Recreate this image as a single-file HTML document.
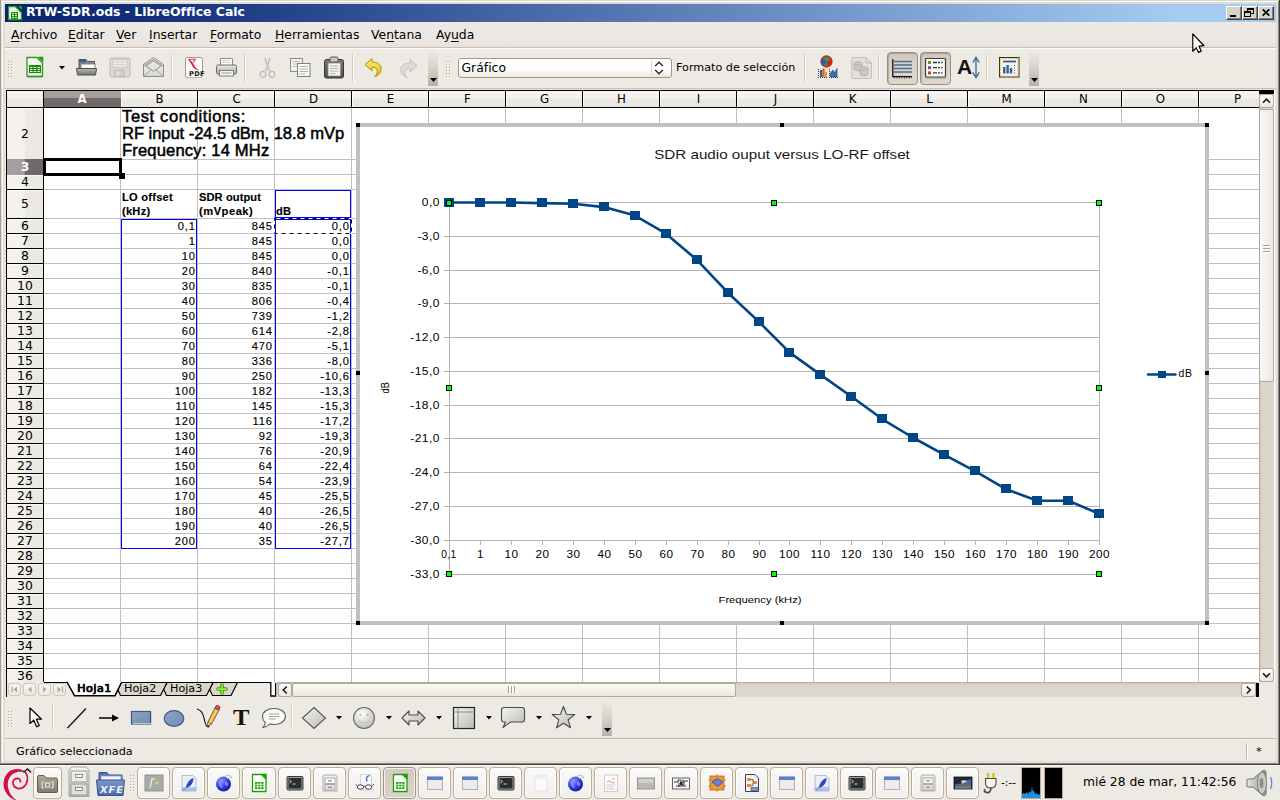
<!DOCTYPE html>
<html lang="es"><head><meta charset="utf-8"><title>RTW-SDR.ods - LibreOffice Calc</title>
<style>
html,body{margin:0;padding:0;}
body{width:1280px;height:800px;overflow:hidden;background:#edeae4;font-family:"DejaVu Sans","Liberation Sans",sans-serif;}
#root{position:relative;width:1280px;height:800px;overflow:hidden;background:#edeae4;}
#root div{position:absolute;box-sizing:border-box;}
#root svg{position:absolute;overflow:visible;}
.t{white-space:pre;line-height:1;color:#000;}
.ui{font-family:"DejaVu Sans","Liberation Sans",sans-serif;font-size:12.5px;}
.cell{font-family:"Liberation Sans",sans-serif;font-size:12px;-webkit-text-stroke:0.15px currentColor;}
u{text-decoration:underline;text-underline-offset:2px;text-decoration-thickness:1px;}

</style></head><body>
<div id="root">
<div style="left:0px;top:0px;width:1280px;height:765px;background:#edeae4;"></div>
<div style="left:0px;top:0px;width:1px;height:765px;background:#a99f8e;"></div>
<div style="left:1px;top:0px;width:1px;height:765px;background:#dedad3;"></div>
<div style="left:2px;top:0px;width:1px;height:765px;background:#ffffff;"></div>
<div style="left:3px;top:0px;width:2px;height:765px;background:#e0ddd5;"></div>
<div style="left:1276px;top:0px;width:2px;height:765px;background:#e0ddd5;"></div>
<div style="left:1278px;top:0px;width:1px;height:765px;background:#8a8883;"></div>
<div style="left:1279px;top:0px;width:1px;height:765px;background:#3d3d3d;"></div>
<div style="left:1px;top:0px;width:1278px;height:1px;background:#dad7d0;"></div>
<div style="left:2px;top:1px;width:1276px;height:1px;background:#ffffff;"></div>
<div style="left:3px;top:2px;width:1273px;height:2px;background:#e0ddd5;"></div>
<div style="left:3px;top:761px;width:1274px;height:2px;background:#e0ddd5;"></div>
<div style="left:1px;top:763px;width:1278px;height:1px;background:#8a8883;"></div>
<div style="left:0px;top:764px;width:1280px;height:1px;background:#3d3d3d;"></div>
<div style="left:5px;top:4px;width:1271px;height:18px;background:linear-gradient(90deg,#0a246a 0,#14307a 12%,#5a78b4 50%,#a6caf0 92%,#a6caf0 100%);"></div>
<svg style="left:0px;top:0px" width="30" height="24" viewBox="0 0 30 24">
<path d="M8.6 6.6 H15.4 L21.4 12.6 V19.6 H8.6 Z" fill="#f4eef6" stroke="#24a30c" stroke-width="1.2"/>
<path d="M17.8 6 H22 V10.2 Z" fill="#1fa600"/>
<rect x="11" y="12" width="7" height="7" rx="0.6" fill="#138a00"/>
<path d="M12 13.6 H14 M15 13.6 H17 M12 15.6 H14 M15 15.6 H17 M12 17.6 H14 M15 17.6 H17" stroke="#eaf7e6" stroke-width="1"/>
</svg>
<div class="t ui" style="left:26px;top:5.5px;font-weight:bold;font-size:12.45px;color:#fff;">RTW-SDR.ods - LibreOffice Calc</div>
<div style="left:1226px;top:6px;width:16px;height:14px;background:#d6d3cb;border-top:1px solid #fff;border-left:1px solid #fff;border-right:1px solid #404040;border-bottom:1px solid #404040;"></div>
<div style="left:1227px;top:18px;width:14px;height:1px;background:#808080;"></div>
<div style="left:1240px;top:7px;width:1px;height:12px;background:#808080;"></div>
<div style="left:1230px;top:15px;width:6px;height:2px;background:#000;"></div>
<div style="left:1242px;top:6px;width:16px;height:14px;background:#d6d3cb;border-top:1px solid #fff;border-left:1px solid #fff;border-right:1px solid #404040;border-bottom:1px solid #404040;"></div>
<div style="left:1243px;top:18px;width:14px;height:1px;background:#808080;"></div>
<div style="left:1256px;top:7px;width:1px;height:12px;background:#808080;"></div>
<div style="left:1247px;top:8px;width:7px;height:6px;border:1px solid #000;border-top-width:2px;"></div>
<div style="left:1244px;top:11px;width:7px;height:6px;border:1px solid #000;border-top-width:2px;background:#d6d3cb;"></div>
<div style="left:1258px;top:6px;width:16px;height:14px;background:#d6d3cb;border-top:1px solid #fff;border-left:1px solid #fff;border-right:1px solid #404040;border-bottom:1px solid #404040;"></div>
<div style="left:1259px;top:18px;width:14px;height:1px;background:#808080;"></div>
<div style="left:1272px;top:7px;width:1px;height:12px;background:#808080;"></div>
<svg style="left:1262px;top:9px" width="8" height="7" viewBox="0 0 8 7"><path d="M0.7 0.4 L7.3 6.6 M7.3 0.4 L0.7 6.6" stroke="#000" stroke-width="1.7"/></svg>
<div style="left:5px;top:22px;width:1271px;height:26px;background:linear-gradient(180deg,#edeae4 0,#ebe7e2 70%,#e6e1db 100%);border-bottom:1px solid #cdbfac;"></div>
<div style="left:5px;top:48px;width:1271px;height:1px;background:#fdfcfb;"></div>
<div class="t ui" style="left:11px;top:28.5px;font-size:12.4px;"><u>A</u>rchivo</div>
<div class="t ui" style="left:68px;top:28.5px;font-size:12.4px;"><u>E</u>ditar</div>
<div class="t ui" style="left:116px;top:28.5px;font-size:12.4px;"><u>V</u>er</div>
<div class="t ui" style="left:149px;top:28.5px;font-size:12.4px;"><u>I</u>nsertar</div>
<div class="t ui" style="left:210px;top:28.5px;font-size:12.4px;"><u>F</u>ormato</div>
<div class="t ui" style="left:275px;top:28.5px;font-size:12.4px;"><u>H</u>erramientas</div>
<div class="t ui" style="left:371px;top:28.5px;font-size:12.4px;">Ve<u>n</u>tana</div>
<div class="t ui" style="left:436px;top:28.5px;font-size:12.4px;">Ay<u>u</u>da</div>
<div style="left:8px;top:61px;width:1px;height:1px;background:#b5a590;"></div>
<div style="left:9px;top:62px;width:1px;height:1px;background:#fbfaf8;"></div>
<div style="left:11px;top:61px;width:1px;height:1px;background:#b5a590;"></div>
<div style="left:12px;top:62px;width:1px;height:1px;background:#fbfaf8;"></div>
<div style="left:8px;top:64px;width:1px;height:1px;background:#b5a590;"></div>
<div style="left:9px;top:65px;width:1px;height:1px;background:#fbfaf8;"></div>
<div style="left:11px;top:64px;width:1px;height:1px;background:#b5a590;"></div>
<div style="left:12px;top:65px;width:1px;height:1px;background:#fbfaf8;"></div>
<div style="left:8px;top:67px;width:1px;height:1px;background:#b5a590;"></div>
<div style="left:9px;top:68px;width:1px;height:1px;background:#fbfaf8;"></div>
<div style="left:11px;top:67px;width:1px;height:1px;background:#b5a590;"></div>
<div style="left:12px;top:68px;width:1px;height:1px;background:#fbfaf8;"></div>
<div style="left:8px;top:70px;width:1px;height:1px;background:#b5a590;"></div>
<div style="left:9px;top:71px;width:1px;height:1px;background:#fbfaf8;"></div>
<div style="left:11px;top:70px;width:1px;height:1px;background:#b5a590;"></div>
<div style="left:12px;top:71px;width:1px;height:1px;background:#fbfaf8;"></div>
<div style="left:8px;top:73px;width:1px;height:1px;background:#b5a590;"></div>
<div style="left:9px;top:74px;width:1px;height:1px;background:#fbfaf8;"></div>
<div style="left:11px;top:73px;width:1px;height:1px;background:#b5a590;"></div>
<div style="left:12px;top:74px;width:1px;height:1px;background:#fbfaf8;"></div>
<div style="left:8px;top:76px;width:1px;height:1px;background:#b5a590;"></div>
<div style="left:9px;top:77px;width:1px;height:1px;background:#fbfaf8;"></div>
<div style="left:11px;top:76px;width:1px;height:1px;background:#b5a590;"></div>
<div style="left:12px;top:77px;width:1px;height:1px;background:#fbfaf8;"></div>
<div style="left:446px;top:61px;width:1px;height:1px;background:#b5a590;"></div>
<div style="left:447px;top:62px;width:1px;height:1px;background:#fbfaf8;"></div>
<div style="left:449px;top:61px;width:1px;height:1px;background:#b5a590;"></div>
<div style="left:450px;top:62px;width:1px;height:1px;background:#fbfaf8;"></div>
<div style="left:446px;top:64px;width:1px;height:1px;background:#b5a590;"></div>
<div style="left:447px;top:65px;width:1px;height:1px;background:#fbfaf8;"></div>
<div style="left:449px;top:64px;width:1px;height:1px;background:#b5a590;"></div>
<div style="left:450px;top:65px;width:1px;height:1px;background:#fbfaf8;"></div>
<div style="left:446px;top:67px;width:1px;height:1px;background:#b5a590;"></div>
<div style="left:447px;top:68px;width:1px;height:1px;background:#fbfaf8;"></div>
<div style="left:449px;top:67px;width:1px;height:1px;background:#b5a590;"></div>
<div style="left:450px;top:68px;width:1px;height:1px;background:#fbfaf8;"></div>
<div style="left:446px;top:70px;width:1px;height:1px;background:#b5a590;"></div>
<div style="left:447px;top:71px;width:1px;height:1px;background:#fbfaf8;"></div>
<div style="left:449px;top:70px;width:1px;height:1px;background:#b5a590;"></div>
<div style="left:450px;top:71px;width:1px;height:1px;background:#fbfaf8;"></div>
<div style="left:446px;top:73px;width:1px;height:1px;background:#b5a590;"></div>
<div style="left:447px;top:74px;width:1px;height:1px;background:#fbfaf8;"></div>
<div style="left:449px;top:73px;width:1px;height:1px;background:#b5a590;"></div>
<div style="left:450px;top:74px;width:1px;height:1px;background:#fbfaf8;"></div>
<div style="left:446px;top:76px;width:1px;height:1px;background:#b5a590;"></div>
<div style="left:447px;top:77px;width:1px;height:1px;background:#fbfaf8;"></div>
<div style="left:449px;top:76px;width:1px;height:1px;background:#b5a590;"></div>
<div style="left:450px;top:77px;width:1px;height:1px;background:#fbfaf8;"></div>
<div style="left:5px;top:88px;width:1271px;height:1px;background:#cdc2b2;"></div>
<div style="left:5px;top:89px;width:1271px;height:1px;background:#e4e0da;"></div>
<div style="left:171px;top:54px;width:1px;height:28px;background:#d3ccc3;"></div>
<div style="left:172px;top:54px;width:1px;height:28px;background:#fbfaf8;"></div>
<div style="left:244px;top:54px;width:1px;height:28px;background:#d3ccc3;"></div>
<div style="left:245px;top:54px;width:1px;height:28px;background:#fbfaf8;"></div>
<div style="left:352px;top:54px;width:1px;height:28px;background:#d3ccc3;"></div>
<div style="left:353px;top:54px;width:1px;height:28px;background:#fbfaf8;"></div>
<div style="left:804px;top:54px;width:1px;height:28px;background:#d3ccc3;"></div>
<div style="left:805px;top:54px;width:1px;height:28px;background:#fbfaf8;"></div>
<div style="left:878px;top:54px;width:1px;height:28px;background:#d3ccc3;"></div>
<div style="left:879px;top:54px;width:1px;height:28px;background:#fbfaf8;"></div>
<div style="left:986px;top:54px;width:1px;height:28px;background:#d3ccc3;"></div>
<div style="left:987px;top:54px;width:1px;height:28px;background:#fbfaf8;"></div>
<div style="left:428px;top:50px;width:10px;height:36px;background:linear-gradient(180deg,#edeae4 0,#d9d4cd 45%,#b5b0a9 100%);"></div>
<svg style="left:429.5px;top:78px" width="7" height="4" viewBox="0 0 7 4"><path d="M0 0 H7 L3.5 4 Z" fill="#000"/></svg>
<div style="left:1029px;top:50px;width:10px;height:36px;background:linear-gradient(180deg,#edeae4 0,#d9d4cd 45%,#b5b0a9 100%);"></div>
<svg style="left:1030.5px;top:78px" width="7" height="4" viewBox="0 0 7 4"><path d="M0 0 H7 L3.5 4 Z" fill="#000"/></svg>
<svg style="left:25px;top:56px" width="20" height="23" viewBox="0 0 20 23"><defs><linearGradient id="gp" x1="0" y1="0" x2="0" y2="1"><stop offset="0" stop-color="#fff"/><stop offset="1" stop-color="#e4e4e0"/></linearGradient></defs>
<path d="M2 1.5 H12 L17.5 7 V20.5 H2 Z" fill="url(#gp)" stroke="#2a9a1a" stroke-width="1.3" stroke-linejoin="round"/>
<path d="M12.5 0.8 H18.3 V6.6 Z" fill="#1da30b"/>
<rect x="4" y="9" width="12" height="8" rx="0.5" fill="#168a08"/>
<path d="M5 11.5 H7.5 M8.7 11.5 H11.2 M12.4 11.5 H14.9 M5 13.5 H7.5 M8.7 13.5 H11.2 M12.4 13.5 H14.9 M5 15.5 H7.5 M8.7 15.5 H11.2 M12.4 15.5 H14.9" stroke="#f2fbf0" stroke-width="1"/>
<path d="M3 21.5 H17" stroke="#b9b6b0" stroke-width="1"/></svg>
<svg style="left:58.5px;top:65.5px" width="6" height="3.5" viewBox="0 0 6 3.5"><path d="M0 0 H6 L3 3.5 Z" fill="#000"/></svg>
<svg style="left:75px;top:57px" width="23" height="20" viewBox="0 0 23 20"><defs><linearGradient id="gf" x1="0" y1="0" x2="0" y2="1"><stop offset="0" stop-color="#b9bbb8"/><stop offset="1" stop-color="#6f7270"/></linearGradient></defs>
<path d="M4 2.5 H11 L12.5 4.5 H19.5 V12 H4 Z" fill="#8e918f" stroke="#4f5250" stroke-width="1"/>
<rect x="4.5" y="3" width="6.5" height="2.5" fill="#3c5d9c"/>
<rect x="6" y="7" width="14" height="5" fill="#fff" stroke="#6d6f6c" stroke-width="0.8"/>
<path d="M1.5 11.5 H21.5 L20.5 18 H2.5 Z" fill="url(#gf)" stroke="#4b4e4c" stroke-width="1" stroke-linejoin="round"/></svg>
<svg style="left:109px;top:57px" width="22" height="21" viewBox="0 0 22 21"><rect x="1" y="1" width="20" height="19" rx="2" fill="#dcdad6" stroke="#bdbab5"/>
<rect x="4" y="2.5" width="14" height="8" fill="#e9e8e5" stroke="#c6c4bf" stroke-width="0.8"/>
<path d="M6 5 H16 M6 7.5 H16" stroke="#cfcdc8" stroke-width="0.8"/>
<rect x="5.5" y="13" width="10" height="6.5" fill="#cfcdc9" stroke="#b9b6b1" stroke-width="0.8"/>
<rect x="7.5" y="14" width="2.6" height="4.6" fill="#e4e3df"/></svg>
<svg style="left:142px;top:56px" width="23" height="23" viewBox="0 0 23 23"><defs><linearGradient id="gm" x1="0" y1="0" x2="0" y2="1"><stop offset="0" stop-color="#fdfdfd"/><stop offset="1" stop-color="#d6d6d4"/></linearGradient></defs>
<path d="M1.5 8.5 L11.5 1.5 L21.5 8.5 V20.5 H1.5 Z" fill="url(#gm)" stroke="#8a8b88" stroke-width="1" stroke-linejoin="round"/>
<path d="M3 9 L11.5 3.2 L20 9 L11.5 14.6 Z" fill="#aeb0ad" stroke="#9d9e9b" stroke-width="0.8"/><path d="M5 10 L11.5 5.5 L18 10 L11.5 14.4 Z" fill="#e4e5e3"/>
<path d="M1.8 9 L11.5 15.5 L21.2 9 M1.8 20.2 L9 13.8 M21.2 20.2 L14 13.8" fill="none" stroke="#9a9b98" stroke-width="0.9"/></svg>
<svg style="left:184px;top:56px" width="20" height="23" viewBox="0 0 20 23"><rect x="1.5" y="1.5" width="17" height="20" rx="1.6" fill="#fafaf9" stroke="#9b9c99" stroke-width="1"/>
<path d="M3.5 3 C6 3.5 8.5 6 10 9 C11 11.5 12.8 13.4 15 13.5 C12 14.6 9.6 12.5 8.3 9.8 C7.2 7.4 5.6 4.8 3.5 3 Z" fill="#d8141c"/>
<path d="M4.2 3.6 C6.5 3 9.4 3.6 11.8 3.2 C9.6 4.8 8.4 6 8.2 8.4" fill="none" stroke="#e9535a" stroke-width="1.1"/>
<path d="M2.5 21.8 H18" stroke="#c9c8c4" stroke-width="1"/></svg>
<div class="t" style="left:189px;top:70.5px;font-size:6.6px;font-weight:bold;font-family:'DejaVu Sans',sans-serif;color:#111;letter-spacing:0.3px">PDF</div>
<svg style="left:215px;top:57px" width="23" height="21" viewBox="0 0 23 21"><defs><linearGradient id="gpr" x1="0" y1="0" x2="0" y2="1"><stop offset="0" stop-color="#e9e9e7"/><stop offset="1" stop-color="#a9aaa7"/></linearGradient></defs>
<path d="M5.5 8 V1.5 H17.5 V8" fill="#fff" stroke="#8b8c89" stroke-width="1"/>
<path d="M7.5 3.5 H15.5 M7.5 5.5 H15.5" stroke="#c2c3c0" stroke-width="0.8"/>
<rect x="1.5" y="8" width="20" height="9" rx="1.5" fill="url(#gpr)" stroke="#6c6d6a" stroke-width="1"/>
<rect x="4.5" y="13.5" width="14" height="5.5" fill="#f4f4f2" stroke="#777875" stroke-width="0.9"/>
<path d="M6.5 16 H16.5" stroke="#9b9c99" stroke-width="1"/></svg>
<svg style="left:258px;top:57px" width="19" height="22" viewBox="0 0 19 22"><g fill="none" stroke="#bdbab6" stroke-width="1.3"><path d="M7 1 L11.5 14"/><path d="M12 1 L7.5 14"/><ellipse cx="5" cy="17.3" rx="2.8" ry="3"/><ellipse cx="14" cy="17.3" rx="2.8" ry="3"/></g></svg>
<svg style="left:289px;top:57px" width="23" height="21" viewBox="0 0 23 21"><rect x="1.5" y="1.5" width="12" height="13" fill="#f3f3f1" stroke="#8a8b88"/>
<path d="M3.5 4.5 H11 M3.5 7 H11 M3.5 9.5 H11" stroke="#b7b8b5" stroke-width="0.9"/>
<rect x="8.5" y="6.5" width="12.5" height="13" fill="#fafaf9" stroke="#7f807d"/>
<path d="M10.5 9.5 H19 M10.5 12 H19 M10.5 14.5 H19 M10.5 17 H16" stroke="#a9aaa7" stroke-width="0.9"/></svg>
<svg style="left:323px;top:56px" width="22" height="23" viewBox="0 0 22 23"><defs><linearGradient id="gpa" x1="0" y1="0" x2="0" y2="1"><stop offset="0" stop-color="#7d7a73"/><stop offset="1" stop-color="#4e4c47"/></linearGradient></defs>
<rect x="1.5" y="3.5" width="19" height="18.5" rx="2" fill="url(#gpa)" stroke="#3a3834"/>
<rect x="7" y="1" width="8" height="5" rx="1.3" fill="#c9c9c6" stroke="#4a4946" stroke-width="0.9"/>
<rect x="5" y="7" width="12.5" height="13" fill="#f6f6f4" stroke="#8b8c89" stroke-width="0.8"/>
<path d="M7 10 H15.5 M7 12.5 H15.5 M7 15 H15.5 M7 17.5 H12.5" stroke="#a8a9a6" stroke-width="0.9"/></svg>
<svg style="left:364px;top:57px" width="21" height="21" viewBox="0 0 21 21"><defs><linearGradient id="gu" x1="0" y1="0" x2="0" y2="1"><stop offset="0" stop-color="#fdf08a"/><stop offset="1" stop-color="#e5b800"/></linearGradient></defs>
<path d="M1 7.5 L8 1.5 V5 C14.5 5 18 8.5 17 13.5 C16.3 16.8 14 18.8 10.5 19.5 C13 17.5 13.8 14.8 12.8 12.6 C12 10.8 10.5 10.2 8 10.2 V13.8 Z" fill="url(#gu)" stroke="#b58c00" stroke-width="1" stroke-linejoin="round"/></svg>
<svg style="left:398px;top:58px" width="20" height="20" viewBox="0 0 20 20"><g transform="translate(20,0) scale(-1,1)"><path d="M1 7.5 L8 1.5 V5 C14.5 5 18 8.5 17 13.5 C16.3 16.8 14 18.8 10.5 19.5 C13 17.5 13.8 14.8 12.8 12.6 C12 10.8 10.5 10.2 8 10.2 V13.8 Z" fill="#dddbd7" stroke="#c4c1bc" stroke-width="1" stroke-linejoin="round"/></g></svg>
<div style="left:458px;top:58px;width:214px;height:20px;background:linear-gradient(180deg,#ffffff 0,#ffffff 55%,#ece9e4 100%);border:1px solid #a8977f;border-radius:3px;"></div>
<div style="left:651px;top:61px;width:1px;height:14px;background:#dcd6cd;"></div>
<svg style="left:653px;top:60px" width="12" height="16" viewBox="0 0 12 16"><path d="M2.2 6 L6 2.2 L9.8 6 M2.2 10 L6 13.8 L9.8 10" fill="none" stroke="#222" stroke-width="1.3"/></svg>
<div class="t ui" style="left:461.5px;top:61.5px;font-size:12.4px;">Gráfico</div>
<div class="t ui" style="left:676px;top:62px;font-size:11.2px;">Formato de selección</div>
<svg style="left:815px;top:55px" width="26" height="25" viewBox="0 0 26 25"><circle cx="11.5" cy="6.5" r="5.4" fill="#2f9e44" stroke="#d81e1e" stroke-width="1.5"/>
<path d="M11.5 6.5 L7.6 2.8 A5.4 5.4 0 0 0 8.5 11 Z" fill="#2a5db0"/>
<path d="M11.5 6.5 L16.6 4.8 A5.4 5.4 0 0 1 13 11.7 Z" fill="#d81e1e"/>
<path d="M3 22.5 H12 M14 22.5 H23" stroke="#333" stroke-width="1" stroke-dasharray="1 1"/>
<path d="M3.5 14 V22 M14.5 14 V22" stroke="#333" stroke-width="1" stroke-dasharray="1 1"/>
<rect x="5" y="15" width="2.2" height="7" fill="#2a5db0"/><rect x="7.4" y="13.5" width="2.2" height="8.5" fill="#e8541a"/><rect x="9.8" y="17" width="2.2" height="5" fill="#f0a30a"/>
<path d="M15.5 22 V18 L18 15 L19.5 18 L22 13.5 V22 Z" fill="#3a6fb5" stroke="#204a87" stroke-width="0.7"/></svg>
<svg style="left:851px;top:56px" width="22" height="24" viewBox="0 0 22 24"><path d="M2 1.5 H15 L20.5 7 V21 Q20.5 22.5 19 22.5 H2 Q0.8 22.5 0.8 21 V3 Q0.8 1.5 2 1.5 Z" fill="#e2e0dc" stroke="#c2bfba"/>
<path d="M15 1.5 V7 H20.5" fill="none" stroke="#c2bfba"/>
<g fill="#cbc9c5" stroke="#b3b0ab" stroke-width="0.9"><path d="M3 7.5 V13 A4 1.8 0 0 0 11 13 V7.5 Z"/><ellipse cx="7" cy="7.5" rx="4" ry="1.8"/>
<path d="M9 12.5 V18 A4 1.8 0 0 0 17 18 V12.5 Z"/><ellipse cx="13" cy="12.5" rx="4" ry="1.8"/></g></svg>
<div style="left:887px;top:52px;width:31px;height:33px;background:linear-gradient(180deg,#cdc5ba,#d8d1c7 30%,#dcd6cc);border:1px solid #998f82;border-radius:4px;box-shadow:inset 1px 1px 1px rgba(90,80,70,.3);"></div>
<div style="left:920px;top:52px;width:31px;height:33px;background:linear-gradient(180deg,#cdc5ba,#d8d1c7 30%,#dcd6cc);border:1px solid #998f82;border-radius:4px;box-shadow:inset 1px 1px 1px rgba(90,80,70,.3);"></div>
<svg style="left:891px;top:58px" width="23" height="22" viewBox="0 0 23 22"><path d="M3 3.5 H21 M3 7 H21 M3 10.5 H21 M3 14 H21" stroke="#4a6f96" stroke-width="1.3"/>
<path d="M1.8 1 V18.6 H21" fill="none" stroke="#111" stroke-width="1.3"/>
<path d="M3 19.8 H21" stroke="#111" stroke-width="1" stroke-dasharray="1 1.5"/></svg>
<svg style="left:924px;top:57px" width="23" height="22" viewBox="0 0 23 22"><rect x="1.5" y="1.5" width="20" height="18.5" rx="1" fill="#fbfbfa" stroke="#3b3b3b" stroke-width="1.2"/>
<rect x="4" y="4" width="3" height="3" fill="#579d1c"/><rect x="4" y="9.2" width="3" height="3" fill="#6a4fb3"/><rect x="4" y="14.4" width="3" height="3" fill="#c5421a"/>
<path d="M9 5.5 H18.5 M9 10.7 H18.5 M9 15.9 H18.5" stroke="#333" stroke-width="1.3" stroke-dasharray="4 1 2 1"/>
<path d="M2 21 H22" stroke="#8c857a" stroke-width="1"/></svg>
<div class="t" style="left:957px;top:56px;font-family:'Liberation Sans',sans-serif;font-weight:bold;font-size:21px;color:#111">A</div>
<svg style="left:972px;top:56px" width="8" height="23" viewBox="0 0 8 23"><path d="M4 3 V20" stroke="#2c5c8f" stroke-width="1.2"/><path d="M0.8 6.5 L4 1.5 L7.2 6.5 M0.8 16.5 L4 21.5 L7.2 16.5" fill="none" stroke="#2c5c8f" stroke-width="1.3"/></svg>
<svg style="left:998px;top:56px" width="23" height="23" viewBox="0 0 23 23"><rect x="1.5" y="1.5" width="19.5" height="19.5" fill="#f2f4f8" stroke="#2d2d2d" stroke-width="1"/>
<rect x="2.5" y="2.5" width="17.5" height="17.5" fill="none" stroke="#f0c419" stroke-width="1.2" stroke-dasharray="1.5 1"/>
<path d="M5 5.5 H18" stroke="#3b5f8f" stroke-width="1.8"/>
<rect x="5" y="11" width="2.4" height="6.5" fill="#3b5f8f"/><rect x="8.4" y="9" width="2.4" height="8.5" fill="#3b5f8f"/><rect x="11.8" y="12" width="2.4" height="5.5" fill="#3b5f8f"/>
<path d="M16 9.5 H18 M16 12 H18 M16 14.5 H18 M16 17 H18" stroke="#3b5f8f" stroke-width="1.1" stroke-dasharray="1 1"/></svg>
<svg style="left:1192px;top:33px" width="14" height="21" viewBox="0 0 14 21"><path d="M0.8 0.9 V18.2 L4.3 14.7 L6.5 19.4 L9.2 18.1 L7 13.2 L11.9 12.7 Z" fill="#fff" stroke="#000" stroke-width="1.25" stroke-linejoin="round"/><path d="M2 4 V15.5 L4.5 13 L6.8 17.8" fill="none" stroke="#d8d8d8" stroke-width="0.8"/></svg>
<div style="left:6px;top:90px;width:1269px;height:593px;background:#fff;"></div>
<div style="left:6px;top:90px;width:1268px;height:1px;background:#000;"></div>
<div style="left:6px;top:90px;width:1px;height:593px;background:#000;"></div>
<div style="left:7px;top:91px;width:1252px;height:16px;background:linear-gradient(180deg,#f7f5f2 0,#f2f0ec 48%,#ebe8e3 52%,#e9e6e0 100%);"></div>
<div style="left:7px;top:107px;width:1252px;height:1px;background:#000;"></div>
<div style="left:7px;top:108px;width:36px;height:575px;background:linear-gradient(90deg,#f5f3ef 0,#f3f1ed 48%,#ece9e4 50%,#ebe8e2 100%);"></div>
<div style="left:43px;top:91px;width:1px;height:592px;background:#000;"></div>
<div style="left:44px;top:91px;width:77px;height:16px;background:linear-gradient(180deg,#a6a1a0 0,#a29d9c 44%,#736b6b 46%,#6f6767 100%);"></div>
<div class="t ui" style="left:44px;top:93.5px;width:76px;text-align:center;font-size:11.8px;font-weight:bold;color:#fff;">A</div>
<div class="t ui" style="left:121px;top:93.5px;width:77px;text-align:center;font-size:11.8px;">B</div>
<div style="left:197px;top:91px;width:1px;height:16px;background:#000;"></div>
<div style="left:121px;top:91px;width:1px;height:16px;background:rgba(255,255,255,.8);"></div>
<div class="t ui" style="left:198px;top:93.5px;width:77px;text-align:center;font-size:11.8px;">C</div>
<div style="left:274px;top:91px;width:1px;height:16px;background:#000;"></div>
<div style="left:198px;top:91px;width:1px;height:16px;background:rgba(255,255,255,.8);"></div>
<div class="t ui" style="left:275px;top:93.5px;width:77px;text-align:center;font-size:11.8px;">D</div>
<div style="left:351px;top:91px;width:1px;height:16px;background:#000;"></div>
<div style="left:275px;top:91px;width:1px;height:16px;background:rgba(255,255,255,.8);"></div>
<div class="t ui" style="left:352px;top:93.5px;width:77px;text-align:center;font-size:11.8px;">E</div>
<div style="left:428px;top:91px;width:1px;height:16px;background:#000;"></div>
<div style="left:352px;top:91px;width:1px;height:16px;background:rgba(255,255,255,.8);"></div>
<div class="t ui" style="left:429px;top:93.5px;width:77px;text-align:center;font-size:11.8px;">F</div>
<div style="left:505px;top:91px;width:1px;height:16px;background:#000;"></div>
<div style="left:429px;top:91px;width:1px;height:16px;background:rgba(255,255,255,.8);"></div>
<div class="t ui" style="left:506px;top:93.5px;width:77px;text-align:center;font-size:11.8px;">G</div>
<div style="left:582px;top:91px;width:1px;height:16px;background:#000;"></div>
<div style="left:506px;top:91px;width:1px;height:16px;background:rgba(255,255,255,.8);"></div>
<div class="t ui" style="left:583px;top:93.5px;width:77px;text-align:center;font-size:11.8px;">H</div>
<div style="left:659px;top:91px;width:1px;height:16px;background:#000;"></div>
<div style="left:583px;top:91px;width:1px;height:16px;background:rgba(255,255,255,.8);"></div>
<div class="t ui" style="left:660px;top:93.5px;width:77px;text-align:center;font-size:11.8px;">I</div>
<div style="left:736px;top:91px;width:1px;height:16px;background:#000;"></div>
<div style="left:660px;top:91px;width:1px;height:16px;background:rgba(255,255,255,.8);"></div>
<div class="t ui" style="left:737px;top:93.5px;width:77px;text-align:center;font-size:11.8px;">J</div>
<div style="left:813px;top:91px;width:1px;height:16px;background:#000;"></div>
<div style="left:737px;top:91px;width:1px;height:16px;background:rgba(255,255,255,.8);"></div>
<div class="t ui" style="left:814px;top:93.5px;width:77px;text-align:center;font-size:11.8px;">K</div>
<div style="left:890px;top:91px;width:1px;height:16px;background:#000;"></div>
<div style="left:814px;top:91px;width:1px;height:16px;background:rgba(255,255,255,.8);"></div>
<div class="t ui" style="left:891px;top:93.5px;width:77px;text-align:center;font-size:11.8px;">L</div>
<div style="left:967px;top:91px;width:1px;height:16px;background:#000;"></div>
<div style="left:891px;top:91px;width:1px;height:16px;background:rgba(255,255,255,.8);"></div>
<div class="t ui" style="left:968px;top:93.5px;width:77px;text-align:center;font-size:11.8px;">M</div>
<div style="left:1044px;top:91px;width:1px;height:16px;background:#000;"></div>
<div style="left:968px;top:91px;width:1px;height:16px;background:rgba(255,255,255,.8);"></div>
<div class="t ui" style="left:1045px;top:93.5px;width:77px;text-align:center;font-size:11.8px;">N</div>
<div style="left:1121px;top:91px;width:1px;height:16px;background:#000;"></div>
<div style="left:1045px;top:91px;width:1px;height:16px;background:rgba(255,255,255,.8);"></div>
<div class="t ui" style="left:1122px;top:93.5px;width:77px;text-align:center;font-size:11.8px;">O</div>
<div style="left:1198px;top:91px;width:1px;height:16px;background:#000;"></div>
<div style="left:1122px;top:91px;width:1px;height:16px;background:rgba(255,255,255,.8);"></div>
<div class="t ui" style="left:1199px;top:93.5px;width:77px;text-align:center;font-size:11.8px;">P</div>
<div style="left:1199px;top:91px;width:1px;height:16px;background:rgba(255,255,255,.8);"></div>
<div class="t ui" style="left:7px;top:128px;width:36px;text-align:center;font-size:12.4px;">2</div>
<div style="left:7px;top:108px;width:36px;height:1px;background:rgba(255,255,255,.7);"></div>
<div style="left:7px;top:159px;width:36px;height:16px;background:linear-gradient(90deg,#a5a1a0 0,#a29e9d 48%,#716a6a 50%,#6e6767 100%);"></div>
<div class="t ui" style="left:7px;top:161px;width:36px;text-align:center;font-size:12.4px;font-weight:bold;color:#fff;">3</div>
<div class="t ui" style="left:7px;top:176px;width:36px;text-align:center;font-size:12.4px;">4</div>
<div style="left:7px;top:189px;width:36px;height:1px;background:#000;"></div>
<div style="left:7px;top:175px;width:36px;height:1px;background:rgba(255,255,255,.7);"></div>
<div class="t ui" style="left:7px;top:198px;width:36px;text-align:center;font-size:12.4px;">5</div>
<div style="left:7px;top:218px;width:36px;height:1px;background:#000;"></div>
<div style="left:7px;top:190px;width:36px;height:1px;background:rgba(255,255,255,.7);"></div>
<div class="t ui" style="left:7px;top:220px;width:36px;text-align:center;font-size:12.4px;">6</div>
<div style="left:7px;top:233px;width:36px;height:1px;background:#000;"></div>
<div style="left:7px;top:219px;width:36px;height:1px;background:rgba(255,255,255,.7);"></div>
<div class="t ui" style="left:7px;top:235px;width:36px;text-align:center;font-size:12.4px;">7</div>
<div style="left:7px;top:248px;width:36px;height:1px;background:#000;"></div>
<div style="left:7px;top:234px;width:36px;height:1px;background:rgba(255,255,255,.7);"></div>
<div class="t ui" style="left:7px;top:250px;width:36px;text-align:center;font-size:12.4px;">8</div>
<div style="left:7px;top:263px;width:36px;height:1px;background:#000;"></div>
<div style="left:7px;top:249px;width:36px;height:1px;background:rgba(255,255,255,.7);"></div>
<div class="t ui" style="left:7px;top:265px;width:36px;text-align:center;font-size:12.4px;">9</div>
<div style="left:7px;top:278px;width:36px;height:1px;background:#000;"></div>
<div style="left:7px;top:264px;width:36px;height:1px;background:rgba(255,255,255,.7);"></div>
<div class="t ui" style="left:7px;top:280px;width:36px;text-align:center;font-size:12.4px;">10</div>
<div style="left:7px;top:293px;width:36px;height:1px;background:#000;"></div>
<div style="left:7px;top:279px;width:36px;height:1px;background:rgba(255,255,255,.7);"></div>
<div class="t ui" style="left:7px;top:295px;width:36px;text-align:center;font-size:12.4px;">11</div>
<div style="left:7px;top:308px;width:36px;height:1px;background:#000;"></div>
<div style="left:7px;top:294px;width:36px;height:1px;background:rgba(255,255,255,.7);"></div>
<div class="t ui" style="left:7px;top:310px;width:36px;text-align:center;font-size:12.4px;">12</div>
<div style="left:7px;top:323px;width:36px;height:1px;background:#000;"></div>
<div style="left:7px;top:309px;width:36px;height:1px;background:rgba(255,255,255,.7);"></div>
<div class="t ui" style="left:7px;top:325px;width:36px;text-align:center;font-size:12.4px;">13</div>
<div style="left:7px;top:338px;width:36px;height:1px;background:#000;"></div>
<div style="left:7px;top:324px;width:36px;height:1px;background:rgba(255,255,255,.7);"></div>
<div class="t ui" style="left:7px;top:340px;width:36px;text-align:center;font-size:12.4px;">14</div>
<div style="left:7px;top:353px;width:36px;height:1px;background:#000;"></div>
<div style="left:7px;top:339px;width:36px;height:1px;background:rgba(255,255,255,.7);"></div>
<div class="t ui" style="left:7px;top:355px;width:36px;text-align:center;font-size:12.4px;">15</div>
<div style="left:7px;top:368px;width:36px;height:1px;background:#000;"></div>
<div style="left:7px;top:354px;width:36px;height:1px;background:rgba(255,255,255,.7);"></div>
<div class="t ui" style="left:7px;top:370px;width:36px;text-align:center;font-size:12.4px;">16</div>
<div style="left:7px;top:383px;width:36px;height:1px;background:#000;"></div>
<div style="left:7px;top:369px;width:36px;height:1px;background:rgba(255,255,255,.7);"></div>
<div class="t ui" style="left:7px;top:385px;width:36px;text-align:center;font-size:12.4px;">17</div>
<div style="left:7px;top:398px;width:36px;height:1px;background:#000;"></div>
<div style="left:7px;top:384px;width:36px;height:1px;background:rgba(255,255,255,.7);"></div>
<div class="t ui" style="left:7px;top:400px;width:36px;text-align:center;font-size:12.4px;">18</div>
<div style="left:7px;top:413px;width:36px;height:1px;background:#000;"></div>
<div style="left:7px;top:399px;width:36px;height:1px;background:rgba(255,255,255,.7);"></div>
<div class="t ui" style="left:7px;top:415px;width:36px;text-align:center;font-size:12.4px;">19</div>
<div style="left:7px;top:428px;width:36px;height:1px;background:#000;"></div>
<div style="left:7px;top:414px;width:36px;height:1px;background:rgba(255,255,255,.7);"></div>
<div class="t ui" style="left:7px;top:430px;width:36px;text-align:center;font-size:12.4px;">20</div>
<div style="left:7px;top:443px;width:36px;height:1px;background:#000;"></div>
<div style="left:7px;top:429px;width:36px;height:1px;background:rgba(255,255,255,.7);"></div>
<div class="t ui" style="left:7px;top:445px;width:36px;text-align:center;font-size:12.4px;">21</div>
<div style="left:7px;top:458px;width:36px;height:1px;background:#000;"></div>
<div style="left:7px;top:444px;width:36px;height:1px;background:rgba(255,255,255,.7);"></div>
<div class="t ui" style="left:7px;top:460px;width:36px;text-align:center;font-size:12.4px;">22</div>
<div style="left:7px;top:473px;width:36px;height:1px;background:#000;"></div>
<div style="left:7px;top:459px;width:36px;height:1px;background:rgba(255,255,255,.7);"></div>
<div class="t ui" style="left:7px;top:475px;width:36px;text-align:center;font-size:12.4px;">23</div>
<div style="left:7px;top:488px;width:36px;height:1px;background:#000;"></div>
<div style="left:7px;top:474px;width:36px;height:1px;background:rgba(255,255,255,.7);"></div>
<div class="t ui" style="left:7px;top:490px;width:36px;text-align:center;font-size:12.4px;">24</div>
<div style="left:7px;top:503px;width:36px;height:1px;background:#000;"></div>
<div style="left:7px;top:489px;width:36px;height:1px;background:rgba(255,255,255,.7);"></div>
<div class="t ui" style="left:7px;top:505px;width:36px;text-align:center;font-size:12.4px;">25</div>
<div style="left:7px;top:518px;width:36px;height:1px;background:#000;"></div>
<div style="left:7px;top:504px;width:36px;height:1px;background:rgba(255,255,255,.7);"></div>
<div class="t ui" style="left:7px;top:520px;width:36px;text-align:center;font-size:12.4px;">26</div>
<div style="left:7px;top:533px;width:36px;height:1px;background:#000;"></div>
<div style="left:7px;top:519px;width:36px;height:1px;background:rgba(255,255,255,.7);"></div>
<div class="t ui" style="left:7px;top:535px;width:36px;text-align:center;font-size:12.4px;">27</div>
<div style="left:7px;top:548px;width:36px;height:1px;background:#000;"></div>
<div style="left:7px;top:534px;width:36px;height:1px;background:rgba(255,255,255,.7);"></div>
<div class="t ui" style="left:7px;top:550px;width:36px;text-align:center;font-size:12.4px;">28</div>
<div style="left:7px;top:563px;width:36px;height:1px;background:#000;"></div>
<div style="left:7px;top:549px;width:36px;height:1px;background:rgba(255,255,255,.7);"></div>
<div class="t ui" style="left:7px;top:565px;width:36px;text-align:center;font-size:12.4px;">29</div>
<div style="left:7px;top:578px;width:36px;height:1px;background:#000;"></div>
<div style="left:7px;top:564px;width:36px;height:1px;background:rgba(255,255,255,.7);"></div>
<div class="t ui" style="left:7px;top:580px;width:36px;text-align:center;font-size:12.4px;">30</div>
<div style="left:7px;top:593px;width:36px;height:1px;background:#000;"></div>
<div style="left:7px;top:579px;width:36px;height:1px;background:rgba(255,255,255,.7);"></div>
<div class="t ui" style="left:7px;top:595px;width:36px;text-align:center;font-size:12.4px;">31</div>
<div style="left:7px;top:608px;width:36px;height:1px;background:#000;"></div>
<div style="left:7px;top:594px;width:36px;height:1px;background:rgba(255,255,255,.7);"></div>
<div class="t ui" style="left:7px;top:610px;width:36px;text-align:center;font-size:12.4px;">32</div>
<div style="left:7px;top:623px;width:36px;height:1px;background:#000;"></div>
<div style="left:7px;top:609px;width:36px;height:1px;background:rgba(255,255,255,.7);"></div>
<div class="t ui" style="left:7px;top:625px;width:36px;text-align:center;font-size:12.4px;">33</div>
<div style="left:7px;top:638px;width:36px;height:1px;background:#000;"></div>
<div style="left:7px;top:624px;width:36px;height:1px;background:rgba(255,255,255,.7);"></div>
<div class="t ui" style="left:7px;top:640px;width:36px;text-align:center;font-size:12.4px;">34</div>
<div style="left:7px;top:653px;width:36px;height:1px;background:#000;"></div>
<div style="left:7px;top:639px;width:36px;height:1px;background:rgba(255,255,255,.7);"></div>
<div class="t ui" style="left:7px;top:655px;width:36px;text-align:center;font-size:12.4px;">35</div>
<div style="left:7px;top:668px;width:36px;height:1px;background:#000;"></div>
<div style="left:7px;top:654px;width:36px;height:1px;background:rgba(255,255,255,.7);"></div>
<div class="t ui" style="left:7px;top:670px;width:36px;text-align:center;font-size:12.4px;">36</div>
<div style="left:7px;top:669px;width:36px;height:1px;background:rgba(255,255,255,.7);"></div>
<div style="left:44px;top:159px;width:1215px;height:1px;background:#c0c0c0;"></div>
<div style="left:44px;top:174px;width:1215px;height:1px;background:#c0c0c0;"></div>
<div style="left:44px;top:189px;width:1215px;height:1px;background:#c0c0c0;"></div>
<div style="left:44px;top:218px;width:1215px;height:1px;background:#c0c0c0;"></div>
<div style="left:44px;top:233px;width:1215px;height:1px;background:#c0c0c0;"></div>
<div style="left:44px;top:248px;width:1215px;height:1px;background:#c0c0c0;"></div>
<div style="left:44px;top:263px;width:1215px;height:1px;background:#c0c0c0;"></div>
<div style="left:44px;top:278px;width:1215px;height:1px;background:#c0c0c0;"></div>
<div style="left:44px;top:293px;width:1215px;height:1px;background:#c0c0c0;"></div>
<div style="left:44px;top:308px;width:1215px;height:1px;background:#c0c0c0;"></div>
<div style="left:44px;top:323px;width:1215px;height:1px;background:#c0c0c0;"></div>
<div style="left:44px;top:338px;width:1215px;height:1px;background:#c0c0c0;"></div>
<div style="left:44px;top:353px;width:1215px;height:1px;background:#c0c0c0;"></div>
<div style="left:44px;top:368px;width:1215px;height:1px;background:#c0c0c0;"></div>
<div style="left:44px;top:383px;width:1215px;height:1px;background:#c0c0c0;"></div>
<div style="left:44px;top:398px;width:1215px;height:1px;background:#c0c0c0;"></div>
<div style="left:44px;top:413px;width:1215px;height:1px;background:#c0c0c0;"></div>
<div style="left:44px;top:428px;width:1215px;height:1px;background:#c0c0c0;"></div>
<div style="left:44px;top:443px;width:1215px;height:1px;background:#c0c0c0;"></div>
<div style="left:44px;top:458px;width:1215px;height:1px;background:#c0c0c0;"></div>
<div style="left:44px;top:473px;width:1215px;height:1px;background:#c0c0c0;"></div>
<div style="left:44px;top:488px;width:1215px;height:1px;background:#c0c0c0;"></div>
<div style="left:44px;top:503px;width:1215px;height:1px;background:#c0c0c0;"></div>
<div style="left:44px;top:518px;width:1215px;height:1px;background:#c0c0c0;"></div>
<div style="left:44px;top:533px;width:1215px;height:1px;background:#c0c0c0;"></div>
<div style="left:44px;top:548px;width:1215px;height:1px;background:#c0c0c0;"></div>
<div style="left:44px;top:563px;width:1215px;height:1px;background:#c0c0c0;"></div>
<div style="left:44px;top:578px;width:1215px;height:1px;background:#c0c0c0;"></div>
<div style="left:44px;top:593px;width:1215px;height:1px;background:#c0c0c0;"></div>
<div style="left:44px;top:608px;width:1215px;height:1px;background:#c0c0c0;"></div>
<div style="left:44px;top:623px;width:1215px;height:1px;background:#c0c0c0;"></div>
<div style="left:44px;top:638px;width:1215px;height:1px;background:#c0c0c0;"></div>
<div style="left:44px;top:653px;width:1215px;height:1px;background:#c0c0c0;"></div>
<div style="left:44px;top:668px;width:1215px;height:1px;background:#c0c0c0;"></div>
<div style="left:120px;top:108px;width:1px;height:575px;background:#c0c0c0;"></div>
<div style="left:197px;top:108px;width:1px;height:575px;background:#c0c0c0;"></div>
<div style="left:274px;top:108px;width:1px;height:575px;background:#c0c0c0;"></div>
<div style="left:351px;top:108px;width:1px;height:575px;background:#c0c0c0;"></div>
<div style="left:428px;top:108px;width:1px;height:575px;background:#c0c0c0;"></div>
<div style="left:505px;top:108px;width:1px;height:575px;background:#c0c0c0;"></div>
<div style="left:582px;top:108px;width:1px;height:575px;background:#c0c0c0;"></div>
<div style="left:659px;top:108px;width:1px;height:575px;background:#c0c0c0;"></div>
<div style="left:736px;top:108px;width:1px;height:575px;background:#c0c0c0;"></div>
<div style="left:813px;top:108px;width:1px;height:575px;background:#c0c0c0;"></div>
<div style="left:890px;top:108px;width:1px;height:575px;background:#c0c0c0;"></div>
<div style="left:967px;top:108px;width:1px;height:575px;background:#c0c0c0;"></div>
<div style="left:1044px;top:108px;width:1px;height:575px;background:#c0c0c0;"></div>
<div style="left:1121px;top:108px;width:1px;height:575px;background:#c0c0c0;"></div>
<div style="left:1198px;top:108px;width:1px;height:575px;background:#c0c0c0;"></div>
<div class="t cell" style="left:122px;top:108px;font-size:16.6px;line-height:17px;-webkit-text-stroke:0.5px #000;letter-spacing:0.6px;">Test conditions:</div>
<div class="t cell" style="left:122px;top:125px;font-size:16.6px;line-height:17px;-webkit-text-stroke:0.5px #000;letter-spacing:-0.07px;">RF input -24.5 dBm, 18.8 mVp</div>
<div class="t cell" style="left:122px;top:142px;font-size:16.6px;line-height:17px;-webkit-text-stroke:0.5px #000;letter-spacing:0.15px;">Frequency: 14 MHz</div>
<div class="t cell" style="left:122px;top:190px;font-size:11.1px;line-height:14px;font-weight:bold;letter-spacing:0.25px;">LO offset</div>
<div class="t cell" style="left:122px;top:204px;font-size:11.1px;line-height:14px;font-weight:bold;letter-spacing:0.25px;">(kHz)</div>
<div class="t cell" style="left:199px;top:190px;font-size:11.1px;line-height:14px;font-weight:bold;letter-spacing:0.1px;">SDR output</div>
<div class="t cell" style="left:199px;top:204px;font-size:11.1px;line-height:14px;font-weight:bold;letter-spacing:0.55px;">(mVpeak)</div>
<div class="t cell" style="left:276px;top:204px;font-size:11.1px;line-height:14px;font-weight:bold;letter-spacing:0.12px;">dB</div>
<div class="t cell" style="left:121px;top:219px;font-size:11.1px;line-height:15px;text-align:right;letter-spacing:0.85px;width:74.8px;">0,1</div>
<div class="t cell" style="left:198px;top:219px;font-size:11.1px;line-height:15px;text-align:right;letter-spacing:0.85px;width:74.8px;">845</div>
<div class="t cell" style="left:275px;top:219px;font-size:11.1px;line-height:15px;text-align:right;letter-spacing:0.85px;width:74.8px;">0,0</div>
<div class="t cell" style="left:121px;top:234px;font-size:11.1px;line-height:15px;text-align:right;letter-spacing:0.85px;width:74.8px;">1</div>
<div class="t cell" style="left:198px;top:234px;font-size:11.1px;line-height:15px;text-align:right;letter-spacing:0.85px;width:74.8px;">845</div>
<div class="t cell" style="left:275px;top:234px;font-size:11.1px;line-height:15px;text-align:right;letter-spacing:0.85px;width:74.8px;">0,0</div>
<div class="t cell" style="left:121px;top:249px;font-size:11.1px;line-height:15px;text-align:right;letter-spacing:0.85px;width:74.8px;">10</div>
<div class="t cell" style="left:198px;top:249px;font-size:11.1px;line-height:15px;text-align:right;letter-spacing:0.85px;width:74.8px;">845</div>
<div class="t cell" style="left:275px;top:249px;font-size:11.1px;line-height:15px;text-align:right;letter-spacing:0.85px;width:74.8px;">0,0</div>
<div class="t cell" style="left:121px;top:264px;font-size:11.1px;line-height:15px;text-align:right;letter-spacing:0.85px;width:74.8px;">20</div>
<div class="t cell" style="left:198px;top:264px;font-size:11.1px;line-height:15px;text-align:right;letter-spacing:0.85px;width:74.8px;">840</div>
<div class="t cell" style="left:275px;top:264px;font-size:11.1px;line-height:15px;text-align:right;letter-spacing:0.85px;width:74.8px;">-0,1</div>
<div class="t cell" style="left:121px;top:279px;font-size:11.1px;line-height:15px;text-align:right;letter-spacing:0.85px;width:74.8px;">30</div>
<div class="t cell" style="left:198px;top:279px;font-size:11.1px;line-height:15px;text-align:right;letter-spacing:0.85px;width:74.8px;">835</div>
<div class="t cell" style="left:275px;top:279px;font-size:11.1px;line-height:15px;text-align:right;letter-spacing:0.85px;width:74.8px;">-0,1</div>
<div class="t cell" style="left:121px;top:294px;font-size:11.1px;line-height:15px;text-align:right;letter-spacing:0.85px;width:74.8px;">40</div>
<div class="t cell" style="left:198px;top:294px;font-size:11.1px;line-height:15px;text-align:right;letter-spacing:0.85px;width:74.8px;">806</div>
<div class="t cell" style="left:275px;top:294px;font-size:11.1px;line-height:15px;text-align:right;letter-spacing:0.85px;width:74.8px;">-0,4</div>
<div class="t cell" style="left:121px;top:309px;font-size:11.1px;line-height:15px;text-align:right;letter-spacing:0.85px;width:74.8px;">50</div>
<div class="t cell" style="left:198px;top:309px;font-size:11.1px;line-height:15px;text-align:right;letter-spacing:0.85px;width:74.8px;">739</div>
<div class="t cell" style="left:275px;top:309px;font-size:11.1px;line-height:15px;text-align:right;letter-spacing:0.85px;width:74.8px;">-1,2</div>
<div class="t cell" style="left:121px;top:324px;font-size:11.1px;line-height:15px;text-align:right;letter-spacing:0.85px;width:74.8px;">60</div>
<div class="t cell" style="left:198px;top:324px;font-size:11.1px;line-height:15px;text-align:right;letter-spacing:0.85px;width:74.8px;">614</div>
<div class="t cell" style="left:275px;top:324px;font-size:11.1px;line-height:15px;text-align:right;letter-spacing:0.85px;width:74.8px;">-2,8</div>
<div class="t cell" style="left:121px;top:339px;font-size:11.1px;line-height:15px;text-align:right;letter-spacing:0.85px;width:74.8px;">70</div>
<div class="t cell" style="left:198px;top:339px;font-size:11.1px;line-height:15px;text-align:right;letter-spacing:0.85px;width:74.8px;">470</div>
<div class="t cell" style="left:275px;top:339px;font-size:11.1px;line-height:15px;text-align:right;letter-spacing:0.85px;width:74.8px;">-5,1</div>
<div class="t cell" style="left:121px;top:354px;font-size:11.1px;line-height:15px;text-align:right;letter-spacing:0.85px;width:74.8px;">80</div>
<div class="t cell" style="left:198px;top:354px;font-size:11.1px;line-height:15px;text-align:right;letter-spacing:0.85px;width:74.8px;">336</div>
<div class="t cell" style="left:275px;top:354px;font-size:11.1px;line-height:15px;text-align:right;letter-spacing:0.85px;width:74.8px;">-8,0</div>
<div class="t cell" style="left:121px;top:369px;font-size:11.1px;line-height:15px;text-align:right;letter-spacing:0.85px;width:74.8px;">90</div>
<div class="t cell" style="left:198px;top:369px;font-size:11.1px;line-height:15px;text-align:right;letter-spacing:0.85px;width:74.8px;">250</div>
<div class="t cell" style="left:275px;top:369px;font-size:11.1px;line-height:15px;text-align:right;letter-spacing:0.85px;width:74.8px;">-10,6</div>
<div class="t cell" style="left:121px;top:384px;font-size:11.1px;line-height:15px;text-align:right;letter-spacing:0.85px;width:74.8px;">100</div>
<div class="t cell" style="left:198px;top:384px;font-size:11.1px;line-height:15px;text-align:right;letter-spacing:0.85px;width:74.8px;">182</div>
<div class="t cell" style="left:275px;top:384px;font-size:11.1px;line-height:15px;text-align:right;letter-spacing:0.85px;width:74.8px;">-13,3</div>
<div class="t cell" style="left:121px;top:399px;font-size:11.1px;line-height:15px;text-align:right;letter-spacing:0.85px;width:74.8px;">110</div>
<div class="t cell" style="left:198px;top:399px;font-size:11.1px;line-height:15px;text-align:right;letter-spacing:0.85px;width:74.8px;">145</div>
<div class="t cell" style="left:275px;top:399px;font-size:11.1px;line-height:15px;text-align:right;letter-spacing:0.85px;width:74.8px;">-15,3</div>
<div class="t cell" style="left:121px;top:414px;font-size:11.1px;line-height:15px;text-align:right;letter-spacing:0.85px;width:74.8px;">120</div>
<div class="t cell" style="left:198px;top:414px;font-size:11.1px;line-height:15px;text-align:right;letter-spacing:0.85px;width:74.8px;">116</div>
<div class="t cell" style="left:275px;top:414px;font-size:11.1px;line-height:15px;text-align:right;letter-spacing:0.85px;width:74.8px;">-17,2</div>
<div class="t cell" style="left:121px;top:429px;font-size:11.1px;line-height:15px;text-align:right;letter-spacing:0.85px;width:74.8px;">130</div>
<div class="t cell" style="left:198px;top:429px;font-size:11.1px;line-height:15px;text-align:right;letter-spacing:0.85px;width:74.8px;">92</div>
<div class="t cell" style="left:275px;top:429px;font-size:11.1px;line-height:15px;text-align:right;letter-spacing:0.85px;width:74.8px;">-19,3</div>
<div class="t cell" style="left:121px;top:444px;font-size:11.1px;line-height:15px;text-align:right;letter-spacing:0.85px;width:74.8px;">140</div>
<div class="t cell" style="left:198px;top:444px;font-size:11.1px;line-height:15px;text-align:right;letter-spacing:0.85px;width:74.8px;">76</div>
<div class="t cell" style="left:275px;top:444px;font-size:11.1px;line-height:15px;text-align:right;letter-spacing:0.85px;width:74.8px;">-20,9</div>
<div class="t cell" style="left:121px;top:459px;font-size:11.1px;line-height:15px;text-align:right;letter-spacing:0.85px;width:74.8px;">150</div>
<div class="t cell" style="left:198px;top:459px;font-size:11.1px;line-height:15px;text-align:right;letter-spacing:0.85px;width:74.8px;">64</div>
<div class="t cell" style="left:275px;top:459px;font-size:11.1px;line-height:15px;text-align:right;letter-spacing:0.85px;width:74.8px;">-22,4</div>
<div class="t cell" style="left:121px;top:474px;font-size:11.1px;line-height:15px;text-align:right;letter-spacing:0.85px;width:74.8px;">160</div>
<div class="t cell" style="left:198px;top:474px;font-size:11.1px;line-height:15px;text-align:right;letter-spacing:0.85px;width:74.8px;">54</div>
<div class="t cell" style="left:275px;top:474px;font-size:11.1px;line-height:15px;text-align:right;letter-spacing:0.85px;width:74.8px;">-23,9</div>
<div class="t cell" style="left:121px;top:489px;font-size:11.1px;line-height:15px;text-align:right;letter-spacing:0.85px;width:74.8px;">170</div>
<div class="t cell" style="left:198px;top:489px;font-size:11.1px;line-height:15px;text-align:right;letter-spacing:0.85px;width:74.8px;">45</div>
<div class="t cell" style="left:275px;top:489px;font-size:11.1px;line-height:15px;text-align:right;letter-spacing:0.85px;width:74.8px;">-25,5</div>
<div class="t cell" style="left:121px;top:504px;font-size:11.1px;line-height:15px;text-align:right;letter-spacing:0.85px;width:74.8px;">180</div>
<div class="t cell" style="left:198px;top:504px;font-size:11.1px;line-height:15px;text-align:right;letter-spacing:0.85px;width:74.8px;">40</div>
<div class="t cell" style="left:275px;top:504px;font-size:11.1px;line-height:15px;text-align:right;letter-spacing:0.85px;width:74.8px;">-26,5</div>
<div class="t cell" style="left:121px;top:519px;font-size:11.1px;line-height:15px;text-align:right;letter-spacing:0.85px;width:74.8px;">190</div>
<div class="t cell" style="left:198px;top:519px;font-size:11.1px;line-height:15px;text-align:right;letter-spacing:0.85px;width:74.8px;">40</div>
<div class="t cell" style="left:275px;top:519px;font-size:11.1px;line-height:15px;text-align:right;letter-spacing:0.85px;width:74.8px;">-26,5</div>
<div class="t cell" style="left:121px;top:534px;font-size:11.1px;line-height:15px;text-align:right;letter-spacing:0.85px;width:74.8px;">200</div>
<div class="t cell" style="left:198px;top:534px;font-size:11.1px;line-height:15px;text-align:right;letter-spacing:0.85px;width:74.8px;">35</div>
<div class="t cell" style="left:275px;top:534px;font-size:11.1px;line-height:15px;text-align:right;letter-spacing:0.85px;width:74.8px;">-27,7</div>
<div style="left:121px;top:219px;width:76px;height:330px;border:1px solid #0000ff;"></div>
<div style="left:275px;top:219px;width:76px;height:330px;border:1px solid #0000ff;"></div>
<div style="left:275px;top:190px;width:76px;height:28px;border:1px solid #0000ff;"></div>
<svg style="left:0;top:0" width="400" height="300" viewBox="0 0 400 300"><rect x="274.5" y="218.5" width="77" height="15" fill="none" stroke="#fff" stroke-width="1"/><rect x="274.5" y="218.5" width="77" height="15" fill="none" stroke="#000" stroke-width="1" stroke-dasharray="4 4" stroke-dashoffset="2"/></svg>
<div style="left:43px;top:158px;width:79px;height:18px;border:3px solid #000;"></div>
<div style="left:119px;top:173px;width:6px;height:6px;background:#000;"></div>
<div style="left:356px;top:123px;width:853px;height:502px;background:#fff;border:4px solid #c0c0c0;"></div>
<div style="left:356px;top:123px;width:4px;height:4px;background:#000;"></div>
<div style="left:780px;top:123px;width:4px;height:4px;background:#000;"></div>
<div style="left:1205px;top:123px;width:4px;height:4px;background:#000;"></div>
<div style="left:356px;top:371px;width:4px;height:4px;background:#000;"></div>
<div style="left:1205px;top:371px;width:4px;height:4px;background:#000;"></div>
<div style="left:356px;top:621px;width:4px;height:4px;background:#000;"></div>
<div style="left:780px;top:621px;width:4px;height:4px;background:#000;"></div>
<div style="left:1205px;top:621px;width:4px;height:4px;background:#000;"></div>
<svg style="left:0;top:0" width="1280" height="800" viewBox="0 0 1280 800"><path d="M444 202.5 H1099.5" stroke="#b3b3b3" stroke-width="1"/><path d="M444 236.5 H1099.5" stroke="#b3b3b3" stroke-width="1"/><path d="M444 270.5 H1099.5" stroke="#b3b3b3" stroke-width="1"/><path d="M444 303.5 H1099.5" stroke="#b3b3b3" stroke-width="1"/><path d="M444 337.5 H1099.5" stroke="#b3b3b3" stroke-width="1"/><path d="M444 371.5 H1099.5" stroke="#b3b3b3" stroke-width="1"/><path d="M444 405.5 H1099.5" stroke="#b3b3b3" stroke-width="1"/><path d="M444 438.5 H1099.5" stroke="#b3b3b3" stroke-width="1"/><path d="M444 472.5 H1099.5" stroke="#b3b3b3" stroke-width="1"/><path d="M444 506.5 H1099.5" stroke="#b3b3b3" stroke-width="1"/><path d="M444 540.5 H1099.5" stroke="#b3b3b3" stroke-width="1"/><path d="M444 574.5 H1099.5" stroke="#b3b3b3" stroke-width="1"/><path d="M449.5 202.5 V575.0" stroke="#b3b3b3" stroke-width="1"/><path d="M1099.5 202.5 V541" stroke="#b3b3b3" stroke-width="1"/><path d="M449.5 540 V545" stroke="#b3b3b3" stroke-width="1"/><path d="M480.5 540 V545" stroke="#b3b3b3" stroke-width="1"/><path d="M511.5 540 V545" stroke="#b3b3b3" stroke-width="1"/><path d="M542.5 540 V545" stroke="#b3b3b3" stroke-width="1"/><path d="M573.5 540 V545" stroke="#b3b3b3" stroke-width="1"/><path d="M604.5 540 V545" stroke="#b3b3b3" stroke-width="1"/><path d="M635.5 540 V545" stroke="#b3b3b3" stroke-width="1"/><path d="M666.5 540 V545" stroke="#b3b3b3" stroke-width="1"/><path d="M697.5 540 V545" stroke="#b3b3b3" stroke-width="1"/><path d="M728.5 540 V545" stroke="#b3b3b3" stroke-width="1"/><path d="M759.5 540 V545" stroke="#b3b3b3" stroke-width="1"/><path d="M789.5 540 V545" stroke="#b3b3b3" stroke-width="1"/><path d="M820.5 540 V545" stroke="#b3b3b3" stroke-width="1"/><path d="M851.5 540 V545" stroke="#b3b3b3" stroke-width="1"/><path d="M882.5 540 V545" stroke="#b3b3b3" stroke-width="1"/><path d="M913.5 540 V545" stroke="#b3b3b3" stroke-width="1"/><path d="M944.5 540 V545" stroke="#b3b3b3" stroke-width="1"/><path d="M975.5 540 V545" stroke="#b3b3b3" stroke-width="1"/><path d="M1006.5 540 V545" stroke="#b3b3b3" stroke-width="1"/><path d="M1037.5 540 V545" stroke="#b3b3b3" stroke-width="1"/><path d="M1068.5 540 V545" stroke="#b3b3b3" stroke-width="1"/><path d="M1099.5 540 V545" stroke="#b3b3b3" stroke-width="1"/><polyline points="449.3,202.5 480.3,202.5 511.2,202.5 542.2,203.1 573.1,203.7 604.1,207.1 635.0,215.6 666.0,233.7 696.9,259.9 727.9,292.7 758.8,321.6 789.8,352.6 820.7,374.9 851.7,396.7 882.6,419.3 913.6,438.0 944.5,454.8 975.5,471.4 1006.4,489.3 1037.4,500.8 1068.3,500.8 1099.3,513.8" fill="none" stroke="#004586" stroke-width="2.6" stroke-linejoin="round"/><rect x="444" y="198" width="10" height="9" fill="#004586"/><rect x="475" y="198" width="10" height="9" fill="#004586"/><rect x="506" y="198" width="10" height="9" fill="#004586"/><rect x="537" y="198" width="10" height="9" fill="#004586"/><rect x="568" y="199" width="10" height="9" fill="#004586"/><rect x="599" y="202" width="10" height="9" fill="#004586"/><rect x="630" y="211" width="10" height="9" fill="#004586"/><rect x="661" y="229" width="10" height="9" fill="#004586"/><rect x="692" y="255" width="10" height="9" fill="#004586"/><rect x="723" y="288" width="10" height="9" fill="#004586"/><rect x="754" y="317" width="10" height="9" fill="#004586"/><rect x="784" y="348" width="10" height="9" fill="#004586"/><rect x="815" y="370" width="10" height="9" fill="#004586"/><rect x="846" y="392" width="10" height="9" fill="#004586"/><rect x="877" y="414" width="10" height="9" fill="#004586"/><rect x="908" y="433" width="10" height="9" fill="#004586"/><rect x="939" y="450" width="10" height="9" fill="#004586"/><rect x="970" y="466" width="10" height="9" fill="#004586"/><rect x="1001" y="484" width="10" height="9" fill="#004586"/><rect x="1032" y="496" width="10" height="9" fill="#004586"/><rect x="1063" y="496" width="10" height="9" fill="#004586"/><rect x="1094" y="509" width="10" height="9" fill="#004586"/><path d="M1148 374.5 H1175.5" stroke="#004586" stroke-width="2.4" stroke-linecap="round"/><rect x="1158" y="371" width="8" height="7" fill="#004586"/></svg>
<div style="left:446px;top:200px;width:6px;height:6px;background:#00ff00;border:1px solid #000;"></div>
<div style="left:771px;top:200px;width:6px;height:6px;background:#00ff00;border:1px solid #000;"></div>
<div style="left:1096px;top:200px;width:6px;height:6px;background:#00ff00;border:1px solid #000;"></div>
<div style="left:446px;top:385px;width:6px;height:6px;background:#00ff00;border:1px solid #000;"></div>
<div style="left:1096px;top:385px;width:6px;height:6px;background:#00ff00;border:1px solid #000;"></div>
<div style="left:446px;top:571px;width:6px;height:6px;background:#00ff00;border:1px solid #000;"></div>
<div style="left:771px;top:571px;width:6px;height:6px;background:#00ff00;border:1px solid #000;"></div>
<div style="left:1096px;top:571px;width:6px;height:6px;background:#00ff00;border:1px solid #000;"></div>
<div class="t" style="left:582px;top:147.5px;font-family:'Liberation Sans',sans-serif;width:400px;text-align:center;font-size:13.4px;color:#1a1a1a;transform:scaleX(1.135);transform-origin:50% 50%;">SDR audio ouput versus LO-RF offset</div>
<div class="t" style="left:380px;top:197.5px;font-family:'Liberation Sans',sans-serif;width:60px;text-align:right;font-size:10.2px;letter-spacing:0.4px;transform:scaleX(1.18);transform-origin:100% 50%;">0,0</div>
<div class="t" style="left:380px;top:231.5px;font-family:'Liberation Sans',sans-serif;width:60px;text-align:right;font-size:10.2px;letter-spacing:0.4px;transform:scaleX(1.18);transform-origin:100% 50%;">-3,0</div>
<div class="t" style="left:380px;top:265.5px;font-family:'Liberation Sans',sans-serif;width:60px;text-align:right;font-size:10.2px;letter-spacing:0.4px;transform:scaleX(1.18);transform-origin:100% 50%;">-6,0</div>
<div class="t" style="left:380px;top:298.5px;font-family:'Liberation Sans',sans-serif;width:60px;text-align:right;font-size:10.2px;letter-spacing:0.4px;transform:scaleX(1.18);transform-origin:100% 50%;">-9,0</div>
<div class="t" style="left:380px;top:332.5px;font-family:'Liberation Sans',sans-serif;width:60px;text-align:right;font-size:10.2px;letter-spacing:0.4px;transform:scaleX(1.18);transform-origin:100% 50%;">-12,0</div>
<div class="t" style="left:380px;top:366.5px;font-family:'Liberation Sans',sans-serif;width:60px;text-align:right;font-size:10.2px;letter-spacing:0.4px;transform:scaleX(1.18);transform-origin:100% 50%;">-15,0</div>
<div class="t" style="left:380px;top:400.5px;font-family:'Liberation Sans',sans-serif;width:60px;text-align:right;font-size:10.2px;letter-spacing:0.4px;transform:scaleX(1.18);transform-origin:100% 50%;">-18,0</div>
<div class="t" style="left:380px;top:433.5px;font-family:'Liberation Sans',sans-serif;width:60px;text-align:right;font-size:10.2px;letter-spacing:0.4px;transform:scaleX(1.18);transform-origin:100% 50%;">-21,0</div>
<div class="t" style="left:380px;top:467.5px;font-family:'Liberation Sans',sans-serif;width:60px;text-align:right;font-size:10.2px;letter-spacing:0.4px;transform:scaleX(1.18);transform-origin:100% 50%;">-24,0</div>
<div class="t" style="left:380px;top:501.5px;font-family:'Liberation Sans',sans-serif;width:60px;text-align:right;font-size:10.2px;letter-spacing:0.4px;transform:scaleX(1.18);transform-origin:100% 50%;">-27,0</div>
<div class="t" style="left:380px;top:535.5px;font-family:'Liberation Sans',sans-serif;width:60px;text-align:right;font-size:10.2px;letter-spacing:0.4px;transform:scaleX(1.18);transform-origin:100% 50%;">-30,0</div>
<div class="t" style="left:380px;top:569.5px;font-family:'Liberation Sans',sans-serif;width:60px;text-align:right;font-size:10.2px;letter-spacing:0.4px;transform:scaleX(1.18);transform-origin:100% 50%;">-33,0</div>
<div class="t" style="left:418.5px;top:550px;font-family:'Liberation Sans',sans-serif;width:61px;text-align:center;font-size:10.2px;letter-spacing:0.4px;transform:scaleX(1.0);transform-origin:50% 50%;">0,1</div>
<div class="t" style="left:449.5px;top:550px;font-family:'Liberation Sans',sans-serif;width:61px;text-align:center;font-size:10.2px;letter-spacing:0.4px;transform:scaleX(1.15);transform-origin:50% 50%;">1</div>
<div class="t" style="left:480.5px;top:550px;font-family:'Liberation Sans',sans-serif;width:61px;text-align:center;font-size:10.2px;letter-spacing:0.4px;transform:scaleX(1.15);transform-origin:50% 50%;">10</div>
<div class="t" style="left:511.5px;top:550px;font-family:'Liberation Sans',sans-serif;width:61px;text-align:center;font-size:10.2px;letter-spacing:0.4px;transform:scaleX(1.15);transform-origin:50% 50%;">20</div>
<div class="t" style="left:542.5px;top:550px;font-family:'Liberation Sans',sans-serif;width:61px;text-align:center;font-size:10.2px;letter-spacing:0.4px;transform:scaleX(1.15);transform-origin:50% 50%;">30</div>
<div class="t" style="left:573.5px;top:550px;font-family:'Liberation Sans',sans-serif;width:61px;text-align:center;font-size:10.2px;letter-spacing:0.4px;transform:scaleX(1.15);transform-origin:50% 50%;">40</div>
<div class="t" style="left:604.5px;top:550px;font-family:'Liberation Sans',sans-serif;width:61px;text-align:center;font-size:10.2px;letter-spacing:0.4px;transform:scaleX(1.15);transform-origin:50% 50%;">50</div>
<div class="t" style="left:635.5px;top:550px;font-family:'Liberation Sans',sans-serif;width:61px;text-align:center;font-size:10.2px;letter-spacing:0.4px;transform:scaleX(1.15);transform-origin:50% 50%;">60</div>
<div class="t" style="left:666.5px;top:550px;font-family:'Liberation Sans',sans-serif;width:61px;text-align:center;font-size:10.2px;letter-spacing:0.4px;transform:scaleX(1.15);transform-origin:50% 50%;">70</div>
<div class="t" style="left:697.5px;top:550px;font-family:'Liberation Sans',sans-serif;width:61px;text-align:center;font-size:10.2px;letter-spacing:0.4px;transform:scaleX(1.15);transform-origin:50% 50%;">80</div>
<div class="t" style="left:728.5px;top:550px;font-family:'Liberation Sans',sans-serif;width:61px;text-align:center;font-size:10.2px;letter-spacing:0.4px;transform:scaleX(1.15);transform-origin:50% 50%;">90</div>
<div class="t" style="left:758.5px;top:550px;font-family:'Liberation Sans',sans-serif;width:61px;text-align:center;font-size:10.2px;letter-spacing:0.4px;transform:scaleX(1.15);transform-origin:50% 50%;">100</div>
<div class="t" style="left:789.5px;top:550px;font-family:'Liberation Sans',sans-serif;width:61px;text-align:center;font-size:10.2px;letter-spacing:0.4px;transform:scaleX(1.15);transform-origin:50% 50%;">110</div>
<div class="t" style="left:820.5px;top:550px;font-family:'Liberation Sans',sans-serif;width:61px;text-align:center;font-size:10.2px;letter-spacing:0.4px;transform:scaleX(1.15);transform-origin:50% 50%;">120</div>
<div class="t" style="left:851.5px;top:550px;font-family:'Liberation Sans',sans-serif;width:61px;text-align:center;font-size:10.2px;letter-spacing:0.4px;transform:scaleX(1.15);transform-origin:50% 50%;">130</div>
<div class="t" style="left:882.5px;top:550px;font-family:'Liberation Sans',sans-serif;width:61px;text-align:center;font-size:10.2px;letter-spacing:0.4px;transform:scaleX(1.15);transform-origin:50% 50%;">140</div>
<div class="t" style="left:913.5px;top:550px;font-family:'Liberation Sans',sans-serif;width:61px;text-align:center;font-size:10.2px;letter-spacing:0.4px;transform:scaleX(1.15);transform-origin:50% 50%;">150</div>
<div class="t" style="left:944.5px;top:550px;font-family:'Liberation Sans',sans-serif;width:61px;text-align:center;font-size:10.2px;letter-spacing:0.4px;transform:scaleX(1.15);transform-origin:50% 50%;">160</div>
<div class="t" style="left:975.5px;top:550px;font-family:'Liberation Sans',sans-serif;width:61px;text-align:center;font-size:10.2px;letter-spacing:0.4px;transform:scaleX(1.15);transform-origin:50% 50%;">170</div>
<div class="t" style="left:1006.5px;top:550px;font-family:'Liberation Sans',sans-serif;width:61px;text-align:center;font-size:10.2px;letter-spacing:0.4px;transform:scaleX(1.15);transform-origin:50% 50%;">180</div>
<div class="t" style="left:1037.5px;top:550px;font-family:'Liberation Sans',sans-serif;width:61px;text-align:center;font-size:10.2px;letter-spacing:0.4px;transform:scaleX(1.15);transform-origin:50% 50%;">190</div>
<div class="t" style="left:1068.5px;top:550px;font-family:'Liberation Sans',sans-serif;width:61px;text-align:center;font-size:10.2px;letter-spacing:0.4px;transform:scaleX(1.15);transform-origin:50% 50%;">200</div>
<div class="t" style="left:660px;top:595px;font-family:'Liberation Sans',sans-serif;width:200px;text-align:center;font-size:9.6px;transform:scaleX(1.17);transform-origin:50% 50%;">Frequency (kHz)</div>
<div class="t" style="left:1178.5px;top:369px;font-family:'Liberation Sans',sans-serif;font-size:10.4px;letter-spacing:0.6px;">dB</div>
<div class="t" style="left:365.5px;top:381.5px;width:40px;text-align:center;font-family:'Liberation Sans',sans-serif;font-size:11.5px;transform:rotate(-90deg) scaleX(0.8);transform-origin:50% 50%;">dB</div>
<div style="left:1259px;top:94px;width:15px;height:588px;background:linear-gradient(90deg,#cfc7bb 0,#dbd4ca 2px,#ded7cd 100%);border-left:1px solid #b5aca0;"></div>
<div style="left:1259px;top:90px;width:15px;height:4px;background:#000;"></div>
<div style="left:1259px;top:94px;width:15px;height:14px;background:linear-gradient(180deg,#fdfcfb,#ece8e2);border:1px solid #b3a796;border-radius:3px;"></div>
<svg style="left:1259px;top:94px" width="15" height="14" viewBox="0 0 15 14"><path d="M4.0 8.8 L7.5 5.2 L11.0 8.8" fill="none" stroke="#1a1a1a" stroke-width="1.6"/></svg>
<div style="left:1259px;top:668px;width:15px;height:14px;background:linear-gradient(180deg,#fdfcfb,#ece8e2);border:1px solid #b3a796;border-radius:3px;"></div>
<svg style="left:1259px;top:668px" width="15" height="14" viewBox="0 0 15 14"><path d="M4.0 5.2 L7.5 8.8 L11.0 5.2" fill="none" stroke="#1a1a1a" stroke-width="1.6"/></svg>
<div style="left:1259px;top:109px;width:15px;height:273px;background:linear-gradient(90deg,#fbfaf8,#ebe7e1);border:1px solid #b3a796;border-radius:2px;"></div>
<div style="left:1263px;top:245px;width:7px;height:1px;background:#a89f93;"></div>
<div style="left:1263px;top:246px;width:7px;height:1px;background:#fff;"></div>
<div style="left:1263px;top:248px;width:7px;height:1px;background:#a89f93;"></div>
<div style="left:1263px;top:249px;width:7px;height:1px;background:#fff;"></div>
<div style="left:1263px;top:251px;width:7px;height:1px;background:#a89f93;"></div>
<div style="left:1263px;top:252px;width:7px;height:1px;background:#fff;"></div>
<div style="left:6px;top:682px;width:1269px;height:15px;background:#edeae4;"></div>
<div style="left:6px;top:682px;width:1px;height:15px;background:#000;"></div>
<div style="left:8px;top:683px;width:13px;height:13px;background:linear-gradient(180deg,#f8f6f3,#ece8e2);border:1px solid #cfc6b8;border-radius:3px;"></div>
<svg style="left:8px;top:683px" width="13" height="13" viewBox="0 0 13 13"><path d="M4 3.5 V9.5" stroke="#aaa6a0" stroke-width="1.2"/><path d="M9 3.5 L5.5 6.5 L9 9.5 Z" fill="#aaa6a0"/></svg>
<div style="left:23px;top:683px;width:13px;height:13px;background:linear-gradient(180deg,#f8f6f3,#ece8e2);border:1px solid #cfc6b8;border-radius:3px;"></div>
<svg style="left:23px;top:683px" width="13" height="13" viewBox="0 0 13 13"><path d="M8.5 3.5 L5 6.5 L8.5 9.5 Z" fill="#aaa6a0"/></svg>
<div style="left:38px;top:683px;width:13px;height:13px;background:linear-gradient(180deg,#f8f6f3,#ece8e2);border:1px solid #cfc6b8;border-radius:3px;"></div>
<svg style="left:38px;top:683px" width="13" height="13" viewBox="0 0 13 13"><path d="M5 3.5 L8.5 6.5 L5 9.5 Z" fill="#aaa6a0"/></svg>
<div style="left:53px;top:683px;width:13px;height:13px;background:linear-gradient(180deg,#f8f6f3,#ece8e2);border:1px solid #cfc6b8;border-radius:3px;"></div>
<svg style="left:53px;top:683px" width="13" height="13" viewBox="0 0 13 13"><path d="M9.5 3.5 V9.5" stroke="#aaa6a0" stroke-width="1.2"/><path d="M4.5 3.5 L8 6.5 L4.5 9.5 Z" fill="#aaa6a0"/></svg>
<svg style="left:0;top:0" width="1280" height="800" viewBox="0 0 1280 800">
<path d="M44 682.5 H67" stroke="#000" stroke-width="1"/>
<path d="M213 682.5 L209.5 689 L212.5 695.5 H231 L237.5 682.5 Z" fill="#dcd5cb" stroke="#000" stroke-width="1.2"/>
<path d="M167 682.5 L163.5 689 L166.5 695.5 H206.5 L213 682.5 Z" fill="#dcd5cb" stroke="#000" stroke-width="1.2"/>
<path d="M121 682.5 L117.5 689 L120.5 695.5 H160.5 L167 682.5 Z" fill="#dcd5cb" stroke="#000" stroke-width="1.2"/>
<path d="M67 682 L74.5 695.5 H115 L121.5 682 Z" fill="#fff"/>
<path d="M67 682 L74.5 695.7 H115 L121.5 682.5" fill="none" stroke="#000" stroke-width="1.5"/>
<path d="M237 682.5 H271" fill="none" stroke="#000" stroke-width="1.2"/><path d="M270.8 682 V696 H275.6 V683" fill="#fff" stroke="#000" stroke-width="1.3"/>
<path d="M218 689 H226 M222 685 V693" stroke="#4e9a06" stroke-width="3.6" stroke-linecap="round"/>
<path d="M218 689 H226 M222 685 V693" stroke="#8ae234" stroke-width="1.8" stroke-linecap="round"/>
</svg>
<div class="t ui" style="left:77px;top:683px;font-size:11.2px;letter-spacing:0.45px;-webkit-text-stroke:0.55px #000;text-shadow:0.6px 0 0 #000;">Hoja1</div>
<div class="t ui" style="left:124px;top:683px;font-size:11.2px;">Hoja2</div>
<div class="t ui" style="left:170px;top:683px;font-size:11.2px;">Hoja3</div>
<div style="left:277px;top:682px;width:980px;height:15px;background:linear-gradient(180deg,#cfc7bb 0,#dbd4ca 2px,#ded7cd 100%);border-top:1px solid #b5aca0;"></div>
<div style="left:278px;top:683px;width:14px;height:14px;background:linear-gradient(180deg,#fdfcfb,#ece8e2);border:1px solid #b3a796;border-radius:3px;"></div>
<svg style="left:278px;top:683px" width="14" height="14" viewBox="0 0 14 14"><path d="M8.8 3.5 L5.2 7.0 L8.8 10.5" fill="none" stroke="#1a1a1a" stroke-width="1.6"/></svg>
<div style="left:1241px;top:683px;width:15px;height:14px;background:linear-gradient(180deg,#fdfcfb,#ece8e2);border:1px solid #b3a796;border-radius:3px;"></div>
<svg style="left:1241px;top:683px" width="15" height="14" viewBox="0 0 15 14"><path d="M5.7 3.5 L9.3 7.0 L5.7 10.5" fill="none" stroke="#1a1a1a" stroke-width="1.6"/></svg>
<div style="left:292px;top:683px;width:444px;height:14px;background:linear-gradient(180deg,#fbfaf8,#ebe7e1);border:1px solid #b3a796;border-radius:2px;"></div>
<div style="left:508px;top:686px;width:1px;height:7px;background:#a89f93;"></div>
<div style="left:509px;top:686px;width:1px;height:7px;background:#fff;"></div>
<div style="left:511px;top:686px;width:1px;height:7px;background:#a89f93;"></div>
<div style="left:512px;top:686px;width:1px;height:7px;background:#fff;"></div>
<div style="left:514px;top:686px;width:1px;height:7px;background:#a89f93;"></div>
<div style="left:515px;top:686px;width:1px;height:7px;background:#fff;"></div>
<div style="left:1256px;top:683px;width:3px;height:14px;background:#000;"></div>
<div style="left:1259px;top:682px;width:16px;height:15px;background:#edeae4;"></div>
<div style="left:5px;top:697px;width:1271px;height:41px;background:#edeae4;"></div>
<div style="left:8px;top:711px;width:1px;height:1px;background:#b5a590;"></div>
<div style="left:9px;top:712px;width:1px;height:1px;background:#fbfaf8;"></div>
<div style="left:11px;top:711px;width:1px;height:1px;background:#b5a590;"></div>
<div style="left:12px;top:712px;width:1px;height:1px;background:#fbfaf8;"></div>
<div style="left:8px;top:714px;width:1px;height:1px;background:#b5a590;"></div>
<div style="left:9px;top:715px;width:1px;height:1px;background:#fbfaf8;"></div>
<div style="left:11px;top:714px;width:1px;height:1px;background:#b5a590;"></div>
<div style="left:12px;top:715px;width:1px;height:1px;background:#fbfaf8;"></div>
<div style="left:8px;top:717px;width:1px;height:1px;background:#b5a590;"></div>
<div style="left:9px;top:718px;width:1px;height:1px;background:#fbfaf8;"></div>
<div style="left:11px;top:717px;width:1px;height:1px;background:#b5a590;"></div>
<div style="left:12px;top:718px;width:1px;height:1px;background:#fbfaf8;"></div>
<div style="left:8px;top:720px;width:1px;height:1px;background:#b5a590;"></div>
<div style="left:9px;top:721px;width:1px;height:1px;background:#fbfaf8;"></div>
<div style="left:11px;top:720px;width:1px;height:1px;background:#b5a590;"></div>
<div style="left:12px;top:721px;width:1px;height:1px;background:#fbfaf8;"></div>
<div style="left:8px;top:723px;width:1px;height:1px;background:#b5a590;"></div>
<div style="left:9px;top:724px;width:1px;height:1px;background:#fbfaf8;"></div>
<div style="left:11px;top:723px;width:1px;height:1px;background:#b5a590;"></div>
<div style="left:12px;top:724px;width:1px;height:1px;background:#fbfaf8;"></div>
<div style="left:8px;top:726px;width:1px;height:1px;background:#b5a590;"></div>
<div style="left:9px;top:727px;width:1px;height:1px;background:#fbfaf8;"></div>
<div style="left:11px;top:726px;width:1px;height:1px;background:#b5a590;"></div>
<div style="left:12px;top:727px;width:1px;height:1px;background:#fbfaf8;"></div>
<div style="left:52px;top:704px;width:1px;height:26px;background:#d3ccc3;"></div>
<div style="left:53px;top:704px;width:1px;height:26px;background:#fbfaf8;"></div>
<div style="left:291px;top:704px;width:1px;height:26px;background:#d3ccc3;"></div>
<div style="left:292px;top:704px;width:1px;height:26px;background:#fbfaf8;"></div>
<div style="left:602px;top:700px;width:10px;height:36px;background:linear-gradient(180deg,#edeae4 0,#d9d4cd 45%,#b5b0a9 100%);"></div>
<svg style="left:603.5px;top:728px" width="7" height="4" viewBox="0 0 7 4"><path d="M0 0 H7 L3.5 4 Z" fill="#000"/></svg>
<svg style="left:29px;top:707px" width="14" height="22" viewBox="0 0 14 22"><path d="M1 1 V16.5 L4.8 13.2 L7.6 19.8 L10.2 18.6 L7.4 12.2 H12.5 Z" fill="#fff" stroke="#000" stroke-width="1.2" stroke-linejoin="round"/></svg>
<svg style="left:66px;top:706px" width="22" height="24" viewBox="0 0 22 24"><path d="M1.5 22 L20 2.5" stroke="#111" stroke-width="1.3"/></svg>
<svg style="left:98px;top:712px" width="22" height="12" viewBox="0 0 22 12"><path d="M1 6 H17" stroke="#000" stroke-width="1.5"/><path d="M14 2.5 L21 6 L14 9.5 Z" fill="#000"/></svg>
<svg style="left:129px;top:706px" width="24" height="24" viewBox="0 0 24 24"><defs><linearGradient id="gb" x1="0" y1="0" x2="1" y2="1"><stop offset="0" stop-color="#8ea6c6"/><stop offset="1" stop-color="#6f8bb3"/></linearGradient></defs><rect x="2.5" y="5.5" width="19" height="12.5" fill="url(#gb)" stroke="#3d5a86" stroke-width="1.2"/><path d="M4 17.5 H22.5 V6" fill="none" stroke="#c9c6c0" stroke-width="1"/></svg>
<svg style="left:162px;top:706px" width="24" height="24" viewBox="0 0 24 24"><ellipse cx="12" cy="12.5" rx="9.8" ry="7.8" fill="url(#gb)" stroke="#3d5a86" stroke-width="1.2"/></svg>
<svg style="left:196px;top:704px" width="25" height="28" viewBox="0 0 25 28"><path d="M1 5 C5 6 7 9 8 14 C9 19 10 23 12 23 C13.5 23 13 20 12 18" fill="none" stroke="#111" stroke-width="1.2"/>
<path d="M12 18 L19 4 L23 6 L15.5 20 L11.5 22 Z" fill="#f3c76a" stroke="#6b4a1b" stroke-width="0.9" stroke-linejoin="round"/>
<path d="M19 4 L20.2 1.8 C21.5 1 23.6 2 24 3.6 L23 6 Z" fill="#d9534f" stroke="#7a2420" stroke-width="0.8"/>
<path d="M12 18 L15.5 20 L11.5 22 Z" fill="#e8d9c0" stroke="#6b4a1b" stroke-width="0.6"/></svg>
<div class="t" style="left:233px;top:706px;font-family:'Liberation Serif',serif;font-weight:bold;font-size:23.5px;color:#1a1200;transform:scaleX(1.05);transform-origin:0 0">T</div>
<svg style="left:261px;top:706px" width="26" height="24" viewBox="0 0 26 24"><path d="M13 2.5 C19.5 2.5 24.5 5.8 24.5 10.5 C24.5 15 19.5 18.5 13 18.5 C11.5 18.5 10 18.3 8.8 18 C7 20 4.5 21.3 2 21.5 C3.6 20 4.3 18.2 4.3 16.5 C2.6 15 1.5 12.8 1.5 10.5 C1.5 5.8 6.5 2.5 13 2.5 Z" fill="#fafafa" stroke="#5d5d5b" stroke-width="1.1"/>
<path d="M8 8 H18 M8 10.5 H18 M8 13 H15" stroke="#9a9a98" stroke-width="0.9"/></svg>
<svg style="left:301px;top:706px" width="26" height="24" viewBox="0 0 26 24"><defs><linearGradient id="gg" x1="0" y1="0" x2="1" y2="1"><stop offset="0" stop-color="#f4f4f3"/><stop offset="1" stop-color="#b9b9b7"/></linearGradient></defs><path d="M13 1.5 L24.5 12 L13 22.5 L1.5 12 Z" fill="url(#gg)" stroke="#555553" stroke-width="1.1"/></svg>
<svg style="left:336px;top:715.5px" width="6" height="3.5" viewBox="0 0 6 3.5"><path d="M0 0 H6 L3 3.5 Z" fill="#000"/></svg>
<svg style="left:352px;top:706px" width="24" height="24" viewBox="0 0 24 24"><defs><radialGradient id="gs" cx="0.4" cy="0.3" r="0.8"><stop offset="0" stop-color="#fff"/><stop offset="1" stop-color="#b5b5b3"/></radialGradient></defs><circle cx="12" cy="12" r="10.5" fill="url(#gs)" stroke="#6a6a68" stroke-width="1.1"/><circle cx="8.5" cy="9" r="1.2" fill="#bdbdbb"/><circle cx="15.5" cy="9" r="1.2" fill="#bdbdbb"/><path d="M6.5 14 C8.5 18 15.5 18 17.5 14" fill="none" stroke="#c2c2c0" stroke-width="1.1"/></svg>
<svg style="left:386px;top:715.5px" width="6" height="3.5" viewBox="0 0 6 3.5"><path d="M0 0 H6 L3 3.5 Z" fill="#000"/></svg>
<svg style="left:401px;top:708px" width="25" height="20" viewBox="0 0 25 20"><path d="M1 10 L8 3 V7 H17 V3 L24 10 L17 17 V13 H8 V17 Z" fill="url(#gg)" stroke="#4a4a48" stroke-width="1.1" stroke-linejoin="round"/></svg>
<svg style="left:436px;top:715.5px" width="6" height="3.5" viewBox="0 0 6 3.5"><path d="M0 0 H6 L3 3.5 Z" fill="#000"/></svg>
<svg style="left:452px;top:706px" width="24" height="24" viewBox="0 0 24 24"><rect x="1.5" y="1.5" width="21" height="21" fill="url(#gg)" stroke="#222" stroke-width="1.2"/><path d="M1.5 6 H22.5 M6 1.5 V22.5" stroke="#8b8b89" stroke-width="1"/></svg>
<svg style="left:486px;top:715.5px" width="6" height="3.5" viewBox="0 0 6 3.5"><path d="M0 0 H6 L3 3.5 Z" fill="#000"/></svg>
<svg style="left:500px;top:706px" width="26" height="25" viewBox="0 0 26 25"><path d="M4 1.5 H22 Q24.5 1.5 24.5 4 V13.5 Q24.5 16 22 16 H10.5 L3 21.5 L5.5 16 H4 Q1.5 16 1.5 13.5 V4 Q1.5 1.5 4 1.5 Z" fill="url(#gg)" stroke="#4a4a48" stroke-width="1.1" stroke-linejoin="round"/></svg>
<svg style="left:536px;top:715.5px" width="6" height="3.5" viewBox="0 0 6 3.5"><path d="M0 0 H6 L3 3.5 Z" fill="#000"/></svg>
<svg style="left:551px;top:705px" width="25" height="25" viewBox="0 0 25 25"><path d="M12.5 1.5 L15.4 9.3 L23.8 9.6 L17.2 14.8 L19.5 22.8 L12.5 18.2 L5.5 22.8 L7.8 14.8 L1.2 9.6 L9.6 9.3 Z" fill="url(#gg)" stroke="#4a4a48" stroke-width="1.1" stroke-linejoin="round"/></svg>
<svg style="left:586px;top:715.5px" width="6" height="3.5" viewBox="0 0 6 3.5"><path d="M0 0 H6 L3 3.5 Z" fill="#000"/></svg>
<div style="left:5px;top:738px;width:1271px;height:1px;background:#bfb2a0;"></div>
<div style="left:5px;top:739px;width:1271px;height:1px;background:#f3f1ed;"></div>
<div class="t ui" style="left:16px;top:745.8px;font-size:11.2px;">Gráfico seleccionada</div>
<div style="left:1246px;top:743px;width:1px;height:16px;background:#bdb5aa;"></div>
<div style="left:1247px;top:743px;width:1px;height:16px;background:#fff;"></div>
<div class="t ui" style="left:1256px;top:746px;font-size:11.2px;">*</div>
<div style="left:0px;top:765px;width:1280px;height:35px;background:#edeae4;"></div>
<div style="left:0px;top:765px;width:1280px;height:1px;background:#fbfaf8;"></div>
<svg style="left:0px;top:760.7px" width="34" height="40" viewBox="0 0 34 40"><path d="M26.5 12 C22.5 7 14 6.6 8.6 11 C2.6 16 2 26 6.6 32.4 C9.2 36 13 38.6 17 39.6 C12.4 36.6 9 31.8 8 26.4 C7 20.4 9.4 14.6 14.4 12 C18.4 10 23.4 10.4 26.5 12 Z" fill="#d70a53"/>
<path d="M25.8 12 C28.6 16 28 22.6 23.6 26 C20 28.8 14.6 27.8 13.2 23.6 C12.2 20.4 14.2 17.4 17.2 17.4 C19.4 17.4 20.8 19 20.4 21" fill="none" stroke="#d70a53" stroke-width="1.7" stroke-linecap="round"/>
<path d="M23.5 11.5 L27.5 8 L31 11.5" fill="none" stroke="#111" stroke-width="1.3"/></svg>
<div style="left:33px;top:767px;width:29px;height:32px;background:linear-gradient(180deg,#fbfaf8,#f1eeea);border:1px solid #bcad99;border-radius:4px;box-shadow:inset 0 0 0 1px rgba(255,255,255,.7);"></div>
<svg style="left:36px;top:774px" width="23" height="20" viewBox="0 0 23 20"><defs><linearGradient id="pf" x1="0" y1="0" x2="0" y2="1"><stop offset="0" stop-color="#a9ab96"/><stop offset="1" stop-color="#7c7f6b"/></linearGradient></defs>
<path d="M1.5 3 Q1.5 1.5 3 1.5 H8 L10 4 H20 Q21.5 4 21.5 5.5 V17 Q21.5 18.5 20 18.5 H3 Q1.5 18.5 1.5 17 Z" fill="url(#pf)" stroke="#5e6150" stroke-width="1"/>
<path d="M6 8 H8 M6 8 V14 M6 14 H8 M17 8 H15 M17 8 V14 M17 14 H15" stroke="#e6e7dc" stroke-width="1.2" fill="none"/>
<rect x="9.5" y="9" width="4" height="4" fill="none" stroke="#e6e7dc" stroke-width="1.2"/></svg>
<svg style="left:67px;top:766px" width="24" height="32" viewBox="0 0 24 32"><defs><linearGradient id="pc" x1="0" y1="0" x2="0" y2="1"><stop offset="0" stop-color="#fbfbfa"/><stop offset="1" stop-color="#b7b8b4"/></linearGradient></defs>
<path d="M2 4 L5 1 H19 L22 4 V30.5 H2 Z" fill="url(#pc)" stroke="#a3a4a0" stroke-width="1"/>
<rect x="4" y="5" width="16" height="11" fill="#ececea" stroke="#9a9b97" stroke-width="1"/>
<rect x="4" y="18" width="16" height="11" fill="#dededb" stroke="#9a9b97" stroke-width="1"/>
<rect x="8.5" y="8.5" width="7" height="3" fill="#fff" stroke="#777" stroke-width="0.8"/>
<rect x="8.5" y="21.5" width="7" height="3" fill="#fff" stroke="#777" stroke-width="0.8"/></svg>
<svg style="left:95px;top:771px" width="31" height="26" viewBox="0 0 31 26"><defs><linearGradient id="px" x1="0" y1="0" x2="0" y2="1"><stop offset="0" stop-color="#7c98cc"/><stop offset="1" stop-color="#4a68a8"/></linearGradient></defs>
<path d="M4 1.5 H12 L14 4 H27 V10 H4 Z" fill="#5573b3" stroke="#3a5590" stroke-width="1"/>
<rect x="6" y="5" width="20" height="6" fill="#f4f6fb" stroke="#8da3cf" stroke-width="0.8"/>
<path d="M1.5 9 H29.5 L28 24.5 H3 Z" fill="url(#px)" stroke="#3a5590" stroke-width="1" stroke-linejoin="round"/></svg>
<div class="t" style="left:100px;top:785.5px;font-family:'DejaVu Sans',sans-serif;font-weight:bold;font-style:italic;font-size:8.6px;color:#eef2fb;letter-spacing:0.8px;transform:scaleX(1.15);transform-origin:0 0">XFE</div>
<div style="left:130px;top:775px;width:1px;height:1px;background:#b5a590;"></div>
<div style="left:131px;top:776px;width:1px;height:1px;background:#fbfaf8;"></div>
<div style="left:133px;top:775px;width:1px;height:1px;background:#b5a590;"></div>
<div style="left:134px;top:776px;width:1px;height:1px;background:#fbfaf8;"></div>
<div style="left:130px;top:778px;width:1px;height:1px;background:#b5a590;"></div>
<div style="left:131px;top:779px;width:1px;height:1px;background:#fbfaf8;"></div>
<div style="left:133px;top:778px;width:1px;height:1px;background:#b5a590;"></div>
<div style="left:134px;top:779px;width:1px;height:1px;background:#fbfaf8;"></div>
<div style="left:130px;top:781px;width:1px;height:1px;background:#b5a590;"></div>
<div style="left:131px;top:782px;width:1px;height:1px;background:#fbfaf8;"></div>
<div style="left:133px;top:781px;width:1px;height:1px;background:#b5a590;"></div>
<div style="left:134px;top:782px;width:1px;height:1px;background:#fbfaf8;"></div>
<div style="left:130px;top:784px;width:1px;height:1px;background:#b5a590;"></div>
<div style="left:131px;top:785px;width:1px;height:1px;background:#fbfaf8;"></div>
<div style="left:133px;top:784px;width:1px;height:1px;background:#b5a590;"></div>
<div style="left:134px;top:785px;width:1px;height:1px;background:#fbfaf8;"></div>
<div style="left:130px;top:787px;width:1px;height:1px;background:#b5a590;"></div>
<div style="left:131px;top:788px;width:1px;height:1px;background:#fbfaf8;"></div>
<div style="left:133px;top:787px;width:1px;height:1px;background:#b5a590;"></div>
<div style="left:134px;top:788px;width:1px;height:1px;background:#fbfaf8;"></div>
<div style="left:130px;top:790px;width:1px;height:1px;background:#b5a590;"></div>
<div style="left:131px;top:791px;width:1px;height:1px;background:#fbfaf8;"></div>
<div style="left:133px;top:790px;width:1px;height:1px;background:#b5a590;"></div>
<div style="left:134px;top:791px;width:1px;height:1px;background:#fbfaf8;"></div>
<div style="left:137px;top:767px;width:33px;height:32px;background:linear-gradient(180deg,#fbfaf8,#f1eeea);border:1px solid #bcad99;border-radius:4px;box-shadow:inset 0 0 0 1px rgba(255,255,255,.7);"></div>
<svg style="left:143.5px;top:773px" width="20" height="20" viewBox="0 0 20 20"><rect x="1" y="2" width="18" height="16" fill="#a9aaa8" stroke="#8e8f8d"/><path d="M6 15 L8 6 M7 6 H11" stroke="#e4e4e2" stroke-width="1.4" fill="none"/><circle cx="13" cy="10" r="1.6" fill="#b6e36a"/></svg>
<div style="left:172px;top:767px;width:33px;height:32px;background:linear-gradient(180deg,#fbfaf8,#f1eeea);border:1px solid #bcad99;border-radius:4px;box-shadow:inset 0 0 0 1px rgba(255,255,255,.7);"></div>
<svg style="left:178.5px;top:773px" width="20" height="20" viewBox="0 0 20 20"><path d="M3 2.5 H14 L17 5.5 V18 H3 Z" fill="#e9eefb" stroke="#a9b7da" stroke-width="0.9"/><path d="M14.5 5 C11 6 7.5 10 6.5 15.5 C10 14.5 14.5 11 14.5 5 Z" fill="#3343b8"/><path d="M6.5 15.5 C5.5 16.5 4.8 17 4 17" stroke="#3343b8" stroke-width="1" fill="none"/><path d="M3 14 H17 V18 H3 Z" fill="#7fa0e0" opacity="0.55"/></svg>
<div style="left:207px;top:767px;width:33px;height:32px;background:linear-gradient(180deg,#fbfaf8,#f1eeea);border:1px solid #bcad99;border-radius:4px;box-shadow:inset 0 0 0 1px rgba(255,255,255,.7);"></div>
<svg style="left:213.5px;top:773px" width="20" height="20" viewBox="0 0 20 20"><defs><radialGradient id="gl2" cx="0.35" cy="0.3" r="0.8"><stop offset="0" stop-color="#8aa0ff"/><stop offset="0.6" stop-color="#2b33d8"/><stop offset="1" stop-color="#16188a"/></radialGradient></defs><circle cx="9.5" cy="11" r="7.5" fill="url(#gl2)"/><path d="M5 8 C7 6 9 7.5 8 10 C7 12 9 13 8.5 15.5 C6 14.5 4 11 5 8 Z M11 9 C13 8 15 10 14 12.5 C13 14 11.5 13 11 11 Z" fill="#7f93ff" opacity="0.8"/><path d="M11 3.5 C13.5 1.5 17 2 18 4.5 C16.5 3.8 14.5 4.2 13.5 5.5 Z" fill="#f5f5f5" stroke="#9aa" stroke-width="0.6"/></svg>
<div style="left:242px;top:767px;width:34px;height:32px;background:linear-gradient(180deg,#fbfaf8,#f1eeea);border:1px solid #bcad99;border-radius:4px;box-shadow:inset 0 0 0 1px rgba(255,255,255,.7);"></div>
<svg style="left:248.5px;top:773px" width="20" height="20" viewBox="0 0 20 20"><path d="M3.5 1.5 H12.5 L17 6 V18.5 H3.5 Z" fill="#fff" stroke="#18a303" stroke-width="1.3" stroke-linejoin="round"/><path d="M12 0.8 H17.8 V6.6 Z" fill="#18a303"/><rect x="6" y="9" width="8.5" height="7" fill="#18a303"/><path d="M6 11.3 H14.5 M6 13.7 H14.5 M8.8 9 V16 M11.7 9 V16" stroke="#fff" stroke-width="0.8"/></svg>
<div style="left:278px;top:767px;width:33px;height:32px;background:linear-gradient(180deg,#fbfaf8,#f1eeea);border:1px solid #bcad99;border-radius:4px;box-shadow:inset 0 0 0 1px rgba(255,255,255,.7);"></div>
<svg style="left:284.5px;top:773px" width="20" height="20" viewBox="0 0 20 20"><rect x="2" y="3.5" width="16" height="13.5" rx="1" fill="#9a9c9a" stroke="#3a3c3b" stroke-width="1"/><rect x="3.5" y="5" width="13" height="10.5" fill="#2b2e2d"/><path d="M4.5 7 L6.5 8.5 L4.5 10" stroke="#e8e8e8" stroke-width="0.9" fill="none"/><path d="M7.5 11 H10.5" stroke="#e8e8e8" stroke-width="0.9"/></svg>
<div style="left:313px;top:767px;width:33px;height:32px;background:linear-gradient(180deg,#fbfaf8,#f1eeea);border:1px solid #bcad99;border-radius:4px;box-shadow:inset 0 0 0 1px rgba(255,255,255,.7);"></div>
<svg style="left:319.5px;top:773px" width="20" height="20" viewBox="0 0 20 20"><path d="M3 4 Q3 2 5 2 H15 Q17 2 17 4 V18 H3 Z" fill="#efefed" stroke="#a5a6a2" stroke-width="0.9"/><rect x="5" y="5" width="10" height="5.5" fill="#fafaf9" stroke="#9a9b97" stroke-width="0.8"/><rect x="5" y="11.5" width="10" height="5.5" fill="#e2e2e0" stroke="#9a9b97" stroke-width="0.8"/><path d="M8 7.8 H12 M8 14.3 H12" stroke="#777" stroke-width="1"/></svg>
<div style="left:348px;top:767px;width:33px;height:32px;background:linear-gradient(180deg,#fbfaf8,#f1eeea);border:1px solid #bcad99;border-radius:4px;box-shadow:inset 0 0 0 1px rgba(255,255,255,.7);"></div>
<svg style="left:354.5px;top:773px" width="20" height="20" viewBox="0 0 20 20"><path d="M5.5 1.5 H16.5 V17 H5.5 Z" fill="#f7f8fb" stroke="#c6cad6" stroke-width="0.8"/><path d="M14.5 2.5 C11.5 3 10.5 6 12.5 8" fill="none" stroke="#3a6fd0" stroke-width="1.4"/><ellipse cx="5.5" cy="14" rx="3.2" ry="2.2" fill="#fff" fill-opacity="0.6" stroke="#444" stroke-width="1"/><ellipse cx="13.5" cy="14" rx="3.2" ry="2.2" fill="#fff" fill-opacity="0.6" stroke="#444" stroke-width="1"/><path d="M8.7 13.5 Q9.5 12.7 10.3 13.5 M2.3 13.5 L1 11.5 M16.7 13.5 L19 11" fill="none" stroke="#444" stroke-width="0.9"/></svg>
<div style="left:383px;top:767px;width:33px;height:32px;background:linear-gradient(180deg,#d2cabf,#d9d2c8);border:1px solid #9f9587;border-radius:4px;box-shadow:inset 0 0 0 1px rgba(255,255,255,.7);"></div>
<svg style="left:389.5px;top:773px" width="20" height="20" viewBox="0 0 20 20"><path d="M3.5 1.5 H12.5 L17 6 V18.5 H3.5 Z" fill="#fff" stroke="#18a303" stroke-width="1.3" stroke-linejoin="round"/><path d="M12 0.8 H17.8 V6.6 Z" fill="#18a303"/><rect x="6" y="9" width="8.5" height="7" fill="#18a303"/><path d="M6 11.3 H14.5 M6 13.7 H14.5 M8.8 9 V16 M11.7 9 V16" stroke="#fff" stroke-width="0.8"/></svg>
<div style="left:418px;top:767px;width:33px;height:32px;background:linear-gradient(180deg,#fbfaf8,#f1eeea);border:1px solid #bcad99;border-radius:4px;box-shadow:inset 0 0 0 1px rgba(255,255,255,.7);"></div>
<svg style="left:424.5px;top:773px" width="20" height="20" viewBox="0 0 20 20"><rect x="2.5" y="4" width="15" height="12.5" fill="#ebebea" stroke="#a9aab2" stroke-width="0.9"/><rect x="2.5" y="4" width="15" height="2.6" fill="#5f86d6"/><rect x="2.5" y="4" width="15" height="2.6" fill="none" stroke="#3c63b8" stroke-width="0.6"/></svg>
<div style="left:453px;top:767px;width:34px;height:32px;background:linear-gradient(180deg,#fbfaf8,#f1eeea);border:1px solid #bcad99;border-radius:4px;box-shadow:inset 0 0 0 1px rgba(255,255,255,.7);"></div>
<svg style="left:459.5px;top:773px" width="20" height="20" viewBox="0 0 20 20"><rect x="2.5" y="4" width="15" height="12.5" fill="#ebebea" stroke="#a9aab2" stroke-width="0.9"/><rect x="2.5" y="4" width="15" height="2.6" fill="#5f86d6"/><rect x="2.5" y="4" width="15" height="2.6" fill="none" stroke="#3c63b8" stroke-width="0.6"/></svg>
<div style="left:489px;top:767px;width:33px;height:32px;background:linear-gradient(180deg,#fbfaf8,#f1eeea);border:1px solid #bcad99;border-radius:4px;box-shadow:inset 0 0 0 1px rgba(255,255,255,.7);"></div>
<svg style="left:495.5px;top:773px" width="20" height="20" viewBox="0 0 20 20"><rect x="2" y="3.5" width="16" height="13.5" rx="1" fill="#9a9c9a" stroke="#3a3c3b" stroke-width="1"/><rect x="3.5" y="5" width="13" height="10.5" fill="#2b2e2d"/><path d="M4.5 7 L6.5 8.5 L4.5 10" stroke="#e8e8e8" stroke-width="0.9" fill="none"/><path d="M7.5 11 H10.5" stroke="#e8e8e8" stroke-width="0.9"/></svg>
<div style="left:524px;top:767px;width:33px;height:32px;background:linear-gradient(180deg,#fbfaf8,#f1eeea);border:1px solid #bcad99;border-radius:4px;box-shadow:inset 0 0 0 1px rgba(255,255,255,.7);"></div>
<svg style="left:530.5px;top:773px" width="20" height="20" viewBox="0 0 20 20"><rect x="4" y="2.5" width="12" height="15.5" fill="#fafafa" stroke="#e2e2e0" stroke-width="0.9"/><rect x="4" y="2.5" width="12" height="3" fill="#ededeb"/></svg>
<div style="left:559px;top:767px;width:33px;height:32px;background:linear-gradient(180deg,#fbfaf8,#f1eeea);border:1px solid #bcad99;border-radius:4px;box-shadow:inset 0 0 0 1px rgba(255,255,255,.7);"></div>
<svg style="left:565.5px;top:773px" width="20" height="20" viewBox="0 0 20 20"><defs><radialGradient id="gl12" cx="0.35" cy="0.3" r="0.8"><stop offset="0" stop-color="#8aa0ff"/><stop offset="0.6" stop-color="#2b33d8"/><stop offset="1" stop-color="#16188a"/></radialGradient></defs><circle cx="9.5" cy="11" r="7.5" fill="url(#gl12)"/><path d="M5 8 C7 6 9 7.5 8 10 C7 12 9 13 8.5 15.5 C6 14.5 4 11 5 8 Z M11 9 C13 8 15 10 14 12.5 C13 14 11.5 13 11 11 Z" fill="#7f93ff" opacity="0.8"/><path d="M11 3.5 C13.5 1.5 17 2 18 4.5 C16.5 3.8 14.5 4.2 13.5 5.5 Z" fill="#f5f5f5" stroke="#9aa" stroke-width="0.6"/></svg>
<div style="left:594px;top:767px;width:33px;height:32px;background:linear-gradient(180deg,#fbfaf8,#f1eeea);border:1px solid #bcad99;border-radius:4px;box-shadow:inset 0 0 0 1px rgba(255,255,255,.7);"></div>
<svg style="left:600.5px;top:773px" width="20" height="20" viewBox="0 0 20 20"><rect x="3.5" y="2" width="13" height="16.5" fill="#fbfbfb" stroke="#c9c9c7" stroke-width="0.9"/><path d="M6 9 Q8 6.5 10 9 T14 9" fill="none" stroke="#d88" stroke-width="0.9"/><path d="M5.5 12 H14.5 M5.5 14 H12 M5.5 16 H14" stroke="#c4c4cc" stroke-width="0.8"/><circle cx="12.5" cy="6" r="1" fill="#e9b"/></svg>
<div style="left:629px;top:767px;width:33px;height:32px;background:linear-gradient(180deg,#fbfaf8,#f1eeea);border:1px solid #bcad99;border-radius:4px;box-shadow:inset 0 0 0 1px rgba(255,255,255,.7);"></div>
<svg style="left:635.5px;top:773px" width="20" height="20" viewBox="0 0 20 20"><rect x="1.5" y="5" width="17" height="11" fill="#b9b9b6" stroke="#8f8f8c" stroke-width="0.9"/><rect x="2.5" y="6" width="15" height="4" fill="#cfcfcc"/></svg>
<div style="left:664px;top:767px;width:34px;height:32px;background:linear-gradient(180deg,#fbfaf8,#f1eeea);border:1px solid #bcad99;border-radius:4px;box-shadow:inset 0 0 0 1px rgba(255,255,255,.7);"></div>
<svg style="left:670.5px;top:773px" width="20" height="20" viewBox="0 0 20 20"><rect x="1.5" y="5" width="17" height="11" fill="#f6f6f6" stroke="#555" stroke-width="0.9"/><path d="M3 9 H7 V7 H10 V12 H13 V8 H17 M5 13 H15 M8 9.5 V14 M12 6.5 V10" fill="none" stroke="#222" stroke-width="0.9"/><rect x="9" y="9" width="2.5" height="3" fill="#222"/></svg>
<div style="left:700px;top:767px;width:33px;height:32px;background:linear-gradient(180deg,#fbfaf8,#f1eeea);border:1px solid #bcad99;border-radius:4px;box-shadow:inset 0 0 0 1px rgba(255,255,255,.7);"></div>
<svg style="left:706.5px;top:773px" width="20" height="20" viewBox="0 0 20 20"><rect x="3" y="3" width="14" height="14" fill="#e89a3a" stroke="#b36a12" stroke-width="0.8"/><path d="M5 9 L10 5.5 L16 9 L11 13.5 Z" fill="#6f7fd6" stroke="#3c4aa0" stroke-width="0.8"/><path d="M10 1.5 V4 M10 16 V18.5 M1.5 7 H4 M1.5 13 H4 M16 7 H18.5 M16 13 H18.5" stroke="#d9822b" stroke-width="1.6"/></svg>
<div style="left:735px;top:767px;width:33px;height:32px;background:linear-gradient(180deg,#fbfaf8,#f1eeea);border:1px solid #bcad99;border-radius:4px;box-shadow:inset 0 0 0 1px rgba(255,255,255,.7);"></div>
<svg style="left:741.5px;top:773px" width="20" height="20" viewBox="0 0 20 20"><path d="M3.5 1.5 H13 L16.5 5 V18.5 H3.5 Z" fill="#f3f4fa" stroke="#3b3f66" stroke-width="1"/><rect x="5" y="5" width="4" height="3" fill="#f08a24"/><rect x="11" y="8" width="4" height="3" fill="#f08a24"/><rect x="5" y="11" width="4" height="3" fill="#f08a24"/><path d="M9 6.5 H11 V9.5 M9 12.5 H11 V10" stroke="#444" stroke-width="0.8" fill="none"/><rect x="9" y="14.5" width="6.5" height="3" fill="#8d96c8" stroke="#3b3f66" stroke-width="0.6"/></svg>
<div style="left:770px;top:767px;width:33px;height:32px;background:linear-gradient(180deg,#fbfaf8,#f1eeea);border:1px solid #bcad99;border-radius:4px;box-shadow:inset 0 0 0 1px rgba(255,255,255,.7);"></div>
<svg style="left:776.5px;top:773px" width="20" height="20" viewBox="0 0 20 20"><rect x="2.5" y="4" width="15" height="12.5" fill="#ebebea" stroke="#a9aab2" stroke-width="0.9"/><rect x="2.5" y="4" width="15" height="2.6" fill="#5f86d6"/><rect x="2.5" y="4" width="15" height="2.6" fill="none" stroke="#3c63b8" stroke-width="0.6"/></svg>
<div style="left:805px;top:767px;width:33px;height:32px;background:linear-gradient(180deg,#fbfaf8,#f1eeea);border:1px solid #bcad99;border-radius:4px;box-shadow:inset 0 0 0 1px rgba(255,255,255,.7);"></div>
<svg style="left:811.5px;top:773px" width="20" height="20" viewBox="0 0 20 20"><path d="M3 2.5 H14 L17 5.5 V18 H3 Z" fill="#e9eefb" stroke="#a9b7da" stroke-width="0.9"/><path d="M14.5 5 C11 6 7.5 10 6.5 15.5 C10 14.5 14.5 11 14.5 5 Z" fill="#3343b8"/><path d="M6.5 15.5 C5.5 16.5 4.8 17 4 17" stroke="#3343b8" stroke-width="1" fill="none"/><path d="M3 14 H17 V18 H3 Z" fill="#7fa0e0" opacity="0.55"/></svg>
<div style="left:840px;top:767px;width:33px;height:32px;background:linear-gradient(180deg,#fbfaf8,#f1eeea);border:1px solid #bcad99;border-radius:4px;box-shadow:inset 0 0 0 1px rgba(255,255,255,.7);"></div>
<svg style="left:846.5px;top:773px" width="20" height="20" viewBox="0 0 20 20"><rect x="2" y="3.5" width="16" height="13.5" rx="1" fill="#9a9c9a" stroke="#3a3c3b" stroke-width="1"/><rect x="3.5" y="5" width="13" height="10.5" fill="#2b2e2d"/><path d="M4.5 7 L6.5 8.5 L4.5 10" stroke="#e8e8e8" stroke-width="0.9" fill="none"/><path d="M7.5 11 H10.5" stroke="#e8e8e8" stroke-width="0.9"/></svg>
<div style="left:875px;top:767px;width:34px;height:32px;background:linear-gradient(180deg,#fbfaf8,#f1eeea);border:1px solid #bcad99;border-radius:4px;box-shadow:inset 0 0 0 1px rgba(255,255,255,.7);"></div>
<svg style="left:881.5px;top:773px" width="20" height="20" viewBox="0 0 20 20"><rect x="2.5" y="4" width="15" height="12.5" fill="#ebebea" stroke="#a9aab2" stroke-width="0.9"/><rect x="2.5" y="4" width="15" height="2.6" fill="#5f86d6"/><rect x="2.5" y="4" width="15" height="2.6" fill="none" stroke="#3c63b8" stroke-width="0.6"/></svg>
<div style="left:911px;top:767px;width:33px;height:32px;background:linear-gradient(180deg,#fbfaf8,#f1eeea);border:1px solid #bcad99;border-radius:4px;box-shadow:inset 0 0 0 1px rgba(255,255,255,.7);"></div>
<svg style="left:917.5px;top:773px" width="20" height="20" viewBox="0 0 20 20"><path d="M3 4 Q3 2 5 2 H15 Q17 2 17 4 V18 H3 Z" fill="#efefed" stroke="#a5a6a2" stroke-width="0.9"/><rect x="5" y="5" width="10" height="5.5" fill="#fafaf9" stroke="#9a9b97" stroke-width="0.8"/><rect x="5" y="11.5" width="10" height="5.5" fill="#e2e2e0" stroke="#9a9b97" stroke-width="0.8"/><path d="M8 7.8 H12 M8 14.3 H12" stroke="#777" stroke-width="1"/></svg>
<div style="left:946px;top:767px;width:33px;height:32px;background:linear-gradient(180deg,#fbfaf8,#f1eeea);border:1px solid #bcad99;border-radius:4px;box-shadow:inset 0 0 0 1px rgba(255,255,255,.7);"></div>
<svg style="left:952.5px;top:773px" width="20" height="20" viewBox="0 0 20 20"><rect x="1" y="4" width="18" height="12" fill="#1f2a38" stroke="#10151c" stroke-width="0.8"/><path d="M2 12 C5 9 8 13 10 9 C12 6 15 8 18 6 V15.5 H2 Z" fill="#4c6a8c"/><path d="M8 8 C10 6.5 13 7 14 9 C12 9 10 10 9 11 Z" fill="#c9d3dd"/><path d="M2 14 C6 12.5 12 14.5 18 12.5 V15.5 H2 Z" fill="#8a7b5e"/></svg>
<svg style="left:980px;top:768px" width="20" height="30" viewBox="0 0 20 30"><path d="M8.5 5 V10.5 M13 5 V10.5" stroke="#f0d21a" stroke-width="2.2"/><path d="M7.6 5 V10 M14 5 V10" stroke="#8a7a10" stroke-width="0.5"/>
<path d="M5.5 10.5 H16 V15 Q16 20 10.8 20 Q5.5 20 5.5 15 Z" fill="#f4f4f2" stroke="#4a4a48" stroke-width="1.1"/>
<path d="M10.8 20 C11.4 23.5 9 25 6.4 24.4 C4.6 24 4 22.6 4.6 21.6" fill="none" stroke="#4a4a48" stroke-width="1.7" stroke-linecap="round"/></svg>
<div class="t ui" style="left:1001px;top:777px;font-size:11px;letter-spacing:-0.2px;">-:--</div>
<div style="left:1021px;top:767px;width:20px;height:32px;background:#000;border:1px solid #b9aa97;"></div>
<div style="left:1044px;top:767px;width:19px;height:32px;background:#000;border:1px solid #b9aa97;"></div>
<svg style="left:1022px;top:786px" width="18" height="12" viewBox="0 0 18 12"><path d="M0 12 V8 L2 7 L3 8 L5 6 L6 8 L8 5 L9 7 L10 0 L11 6 L12 4 L13 8 L15 7 L16 9 L18 8 V12 Z" fill="#1d8fe0"/></svg>
<div class="t ui" style="left:1083px;top:776px;font-size:12.3px;">mié 28 de mar, 11:42:56</div>
<svg style="left:1246px;top:768px" width="28" height="30" viewBox="0 0 28 30"><defs><linearGradient id="sp" x1="0" y1="0" x2="1" y2="0"><stop offset="0" stop-color="#e9e9e7"/><stop offset="1" stop-color="#8f908d"/></linearGradient></defs>
<path d="M2 11 H7 L17 2.5 Q20 1.5 20 5 V25 Q20 28.5 17 27.5 L7 19 H2 Q1 19 1 18 V12 Q1 11 2 11 Z" fill="url(#sp)" stroke="#6d6e6b" stroke-width="1"/>
<ellipse cx="16" cy="15" rx="4.5" ry="11" fill="#c9cac7" stroke="#7d7e7b" stroke-width="0.9"/>
<ellipse cx="15.5" cy="15" rx="2" ry="5" fill="#8d8e8b"/>
<path d="M24.5 9 Q27 15 24.5 21" fill="none" stroke="#5f88d8" stroke-width="1.3"/></svg>
</div>
</body></html>
